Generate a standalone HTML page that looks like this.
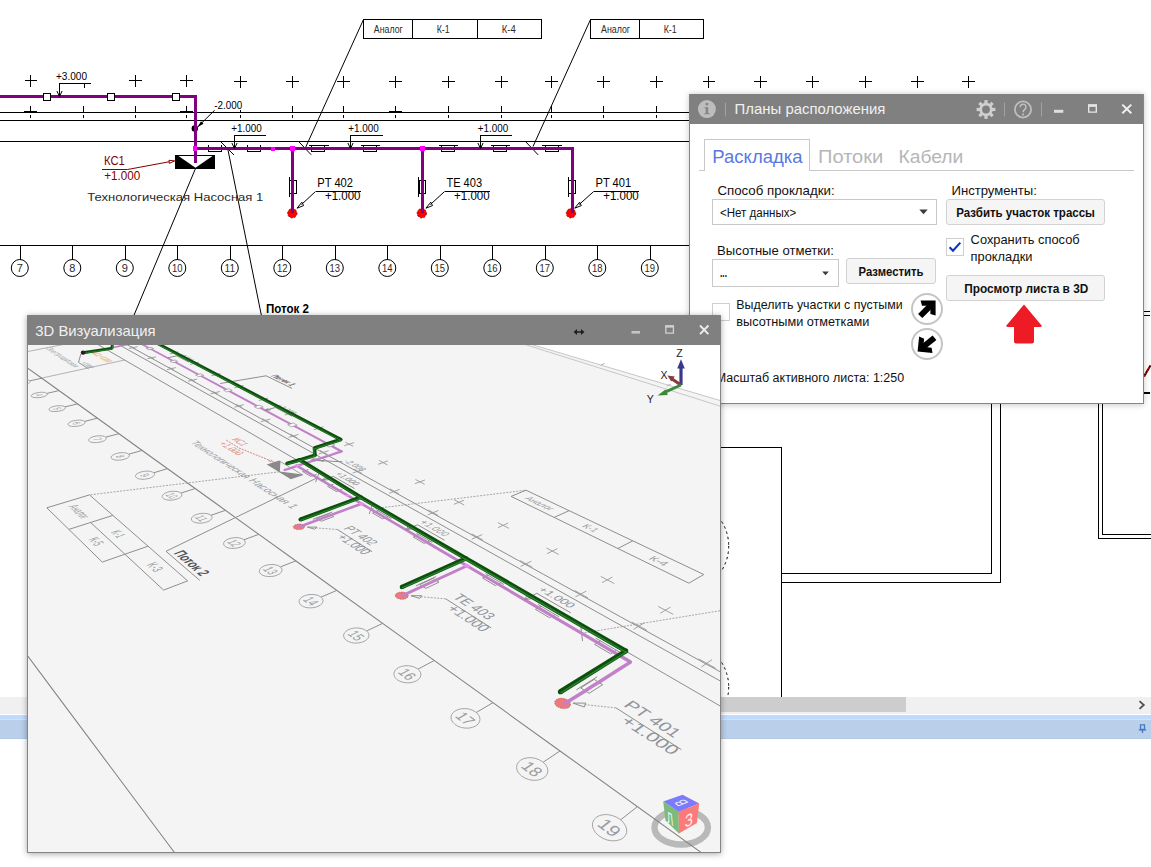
<!DOCTYPE html>
<html lang="ru"><head><meta charset="utf-8"><title>Планы расположения</title>
<style>
html,body{margin:0;padding:0}
body{width:1151px;height:867px;position:relative;overflow:hidden;background:#fff;font-family:"Liberation Sans",sans-serif}
svg text{font-family:"Liberation Sans",sans-serif}
.abs{position:absolute}
#cad{left:0;top:0}
#sb{left:0;top:697px;width:1151px;height:17px;background:#f0f0f0}
#sbthumb{left:60px;top:0;width:846px;height:15px;background:#cdcdcd}
#bar1{left:0;top:715px;width:1151px;height:5px;background:#c0daff;box-shadow:inset 0 -1px 0 #d4e3f3}
#bar2{left:0;top:720px;width:1151px;height:19px;background:#b9cfea;box-shadow:inset 0 -1px 0 #b2c9e5}
/* panel */
#panel{left:690px;top:94px;width:453px;height:309px;background:#fff;box-shadow:-1px 0 0 0 #858585,1px 0 0 0 #858585,0 1px 0 0 #858585,-1px 1px 0 0 #858585,1px 1px 0 0 #858585,0 1px 6px 1px rgba(0,0,0,.22)}
#ptitle{left:0;top:0;width:453px;height:30px;background:#808080}
.t{position:absolute;white-space:nowrap;line-height:1;color:#000}
.btn{position:absolute;background:#f5f5f5;border:1px solid #d2d2d2;border-radius:3px;box-sizing:border-box}
.combo{position:absolute;background:#fff;border:1px solid #c9c9c9;box-sizing:border-box}
.chk{position:absolute;background:#fff;border:1px solid #cfcfcf;box-sizing:border-box;width:18px;height:18px}
/* 3d window */
#win{left:27px;top:315px;width:694px;height:538px;background:#f4f4f4;box-shadow:0 0 0 0 #000,0 1px 6px rgba(0,0,0,.35)}
#wtitle{left:0;top:0;width:694px;height:30px;background:#808080}
#wbody{left:0;top:30px;width:693px;height:507px;border-left:1px solid #858585;border-right:1px solid #858585;border-bottom:1px solid #858585;box-sizing:content-box;width:692px;overflow:hidden}
</style></head><body>
<svg id="cad" class="abs" width="1151" height="867" viewBox="0 0 1151 867">
<path d="M-420 112.5 L1100 112.5" stroke="#000" stroke-width="1" fill="none" shape-rendering="crispEdges"/>
<path d="M-420 120.5 L1100 120.5" stroke="#000" stroke-width="1" fill="none" shape-rendering="crispEdges"/>
<path d="M-420 141.5 L1100 141.5" stroke="#000" stroke-width="1" fill="none" shape-rendering="crispEdges"/>
<path d="M-190 141.5 L-190 245.5" stroke="#000" stroke-width="1" fill="none" shape-rendering="crispEdges"/>
<path d="M-298 141.5 L-298 245.5" stroke="#000" stroke-width="1" fill="none" shape-rendering="crispEdges"/>
<path d="M-443.5 80.5 L-431 80.5" stroke="#000" stroke-width="1" fill="none" shape-rendering="crispEdges"/>
<path d="M-437.5 74.5 L-437.5 86.5" stroke="#000" stroke-width="1" fill="none" shape-rendering="crispEdges"/>
<path d="M-437.5 106 L-437.5 112.5" stroke="#000" stroke-width="1" fill="none" shape-rendering="crispEdges"/>
<path d="M-437.5 115 L-437.5 117.5" stroke="#000" stroke-width="1" fill="none" shape-rendering="crispEdges"/>
<path d="M-391.4 80.5 L-378.9 80.5" stroke="#000" stroke-width="1" fill="none" shape-rendering="crispEdges"/>
<path d="M-385.4 74.5 L-385.4 86.5" stroke="#000" stroke-width="1" fill="none" shape-rendering="crispEdges"/>
<path d="M-385.4 106 L-385.4 112.5" stroke="#000" stroke-width="1" fill="none" shape-rendering="crispEdges"/>
<path d="M-385.4 115 L-385.4 117.5" stroke="#000" stroke-width="1" fill="none" shape-rendering="crispEdges"/>
<path d="M-339.3 80.5 L-326.8 80.5" stroke="#000" stroke-width="1" fill="none" shape-rendering="crispEdges"/>
<path d="M-333.3 74.5 L-333.3 86.5" stroke="#000" stroke-width="1" fill="none" shape-rendering="crispEdges"/>
<path d="M-333.3 106 L-333.3 112.5" stroke="#000" stroke-width="1" fill="none" shape-rendering="crispEdges"/>
<path d="M-333.3 115 L-333.3 117.5" stroke="#000" stroke-width="1" fill="none" shape-rendering="crispEdges"/>
<path d="M-287.2 80.5 L-274.7 80.5" stroke="#000" stroke-width="1" fill="none" shape-rendering="crispEdges"/>
<path d="M-281.2 74.5 L-281.2 86.5" stroke="#000" stroke-width="1" fill="none" shape-rendering="crispEdges"/>
<path d="M-281.2 106 L-281.2 112.5" stroke="#000" stroke-width="1" fill="none" shape-rendering="crispEdges"/>
<path d="M-281.2 115 L-281.2 117.5" stroke="#000" stroke-width="1" fill="none" shape-rendering="crispEdges"/>
<path d="M-235.1 80.5 L-222.6 80.5" stroke="#000" stroke-width="1" fill="none" shape-rendering="crispEdges"/>
<path d="M-229.1 74.5 L-229.1 86.5" stroke="#000" stroke-width="1" fill="none" shape-rendering="crispEdges"/>
<path d="M-229.1 106 L-229.1 112.5" stroke="#000" stroke-width="1" fill="none" shape-rendering="crispEdges"/>
<path d="M-229.1 115 L-229.1 117.5" stroke="#000" stroke-width="1" fill="none" shape-rendering="crispEdges"/>
<path d="M-183 80.5 L-170.5 80.5" stroke="#000" stroke-width="1" fill="none" shape-rendering="crispEdges"/>
<path d="M-177 74.5 L-177 86.5" stroke="#000" stroke-width="1" fill="none" shape-rendering="crispEdges"/>
<path d="M-177 106 L-177 112.5" stroke="#000" stroke-width="1" fill="none" shape-rendering="crispEdges"/>
<path d="M-177 115 L-177 117.5" stroke="#000" stroke-width="1" fill="none" shape-rendering="crispEdges"/>
<path d="M-130.9 80.5 L-118.4 80.5" stroke="#000" stroke-width="1" fill="none" shape-rendering="crispEdges"/>
<path d="M-124.9 74.5 L-124.9 86.5" stroke="#000" stroke-width="1" fill="none" shape-rendering="crispEdges"/>
<path d="M-124.9 106 L-124.9 112.5" stroke="#000" stroke-width="1" fill="none" shape-rendering="crispEdges"/>
<path d="M-124.9 115 L-124.9 117.5" stroke="#000" stroke-width="1" fill="none" shape-rendering="crispEdges"/>
<path d="M-78.8 80.5 L-66.3 80.5" stroke="#000" stroke-width="1" fill="none" shape-rendering="crispEdges"/>
<path d="M-72.8 74.5 L-72.8 86.5" stroke="#000" stroke-width="1" fill="none" shape-rendering="crispEdges"/>
<path d="M-72.8 106 L-72.8 112.5" stroke="#000" stroke-width="1" fill="none" shape-rendering="crispEdges"/>
<path d="M-72.8 115 L-72.8 117.5" stroke="#000" stroke-width="1" fill="none" shape-rendering="crispEdges"/>
<path d="M-26.7 80.5 L-14.2 80.5" stroke="#000" stroke-width="1" fill="none" shape-rendering="crispEdges"/>
<path d="M-20.7 74.5 L-20.7 86.5" stroke="#000" stroke-width="1" fill="none" shape-rendering="crispEdges"/>
<path d="M-20.7 106 L-20.7 112.5" stroke="#000" stroke-width="1" fill="none" shape-rendering="crispEdges"/>
<path d="M-20.7 115 L-20.7 117.5" stroke="#000" stroke-width="1" fill="none" shape-rendering="crispEdges"/>
<path d="M24.9 80.5 L37.4 80.5" stroke="#000" stroke-width="1" fill="none" shape-rendering="crispEdges"/>
<path d="M30.9 74.5 L30.9 86.5" stroke="#000" stroke-width="1" fill="none" shape-rendering="crispEdges"/>
<path d="M30.9 106 L30.9 112.5" stroke="#000" stroke-width="1" fill="none" shape-rendering="crispEdges"/>
<path d="M30.9 115 L30.9 117.5" stroke="#000" stroke-width="1" fill="none" shape-rendering="crispEdges"/>
<rect x="24.4" y="110.5" width="13" height="2" fill="#000" shape-rendering="crispEdges"/>
<path d="M84.5 83.5 L84.5 88" stroke="#000" stroke-width="1" fill="none" shape-rendering="crispEdges"/>
<path d="M83.5 106 L83.5 112.5" stroke="#000" stroke-width="1" fill="none" shape-rendering="crispEdges"/>
<path d="M83.5 115 L83.5 117.5" stroke="#000" stroke-width="1" fill="none" shape-rendering="crispEdges"/>
<path d="M129.2 80.5 L141.7 80.5" stroke="#000" stroke-width="1" fill="none" shape-rendering="crispEdges"/>
<path d="M135.2 74.5 L135.2 86.5" stroke="#000" stroke-width="1" fill="none" shape-rendering="crispEdges"/>
<path d="M135.2 106 L135.2 112.5" stroke="#000" stroke-width="1" fill="none" shape-rendering="crispEdges"/>
<path d="M135.2 115 L135.2 117.5" stroke="#000" stroke-width="1" fill="none" shape-rendering="crispEdges"/>
<path d="M180.3 80.5 L192.8 80.5" stroke="#000" stroke-width="1" fill="none" shape-rendering="crispEdges"/>
<path d="M186.3 74.5 L186.3 86.5" stroke="#000" stroke-width="1" fill="none" shape-rendering="crispEdges"/>
<path d="M186.3 106 L186.3 112.5" stroke="#000" stroke-width="1" fill="none" shape-rendering="crispEdges"/>
<path d="M186.3 115 L186.3 117.5" stroke="#000" stroke-width="1" fill="none" shape-rendering="crispEdges"/>
<rect x="179.8" y="110.5" width="13" height="2" fill="#000" shape-rendering="crispEdges"/>
<path d="M234 81.5 L246.5 81.5" stroke="#000" stroke-width="1" fill="none" shape-rendering="crispEdges"/>
<path d="M240 75.5 L240 87.5" stroke="#000" stroke-width="1" fill="none" shape-rendering="crispEdges"/>
<path d="M240 109.5 L240 112.5" stroke="#000" stroke-width="1" fill="none" shape-rendering="crispEdges"/>
<path d="M240 115 L240 117.5" stroke="#000" stroke-width="1" fill="none" shape-rendering="crispEdges"/>
<path d="M286.3 81.5 L298.8 81.5" stroke="#000" stroke-width="1" fill="none" shape-rendering="crispEdges"/>
<path d="M292.3 75.5 L292.3 87.5" stroke="#000" stroke-width="1" fill="none" shape-rendering="crispEdges"/>
<path d="M292.3 106 L292.3 112.5" stroke="#000" stroke-width="1" fill="none" shape-rendering="crispEdges"/>
<path d="M292.3 115 L292.3 117.5" stroke="#000" stroke-width="1" fill="none" shape-rendering="crispEdges"/>
<path d="M337 81.5 L349.5 81.5" stroke="#000" stroke-width="1" fill="none" shape-rendering="crispEdges"/>
<path d="M343 75.5 L343 87.5" stroke="#000" stroke-width="1" fill="none" shape-rendering="crispEdges"/>
<path d="M343 106 L343 112.5" stroke="#000" stroke-width="1" fill="none" shape-rendering="crispEdges"/>
<path d="M343 115 L343 117.5" stroke="#000" stroke-width="1" fill="none" shape-rendering="crispEdges"/>
<path d="M389.3 81.5 L401.8 81.5" stroke="#000" stroke-width="1" fill="none" shape-rendering="crispEdges"/>
<path d="M395.3 75.5 L395.3 87.5" stroke="#000" stroke-width="1" fill="none" shape-rendering="crispEdges"/>
<path d="M395.3 106 L395.3 112.5" stroke="#000" stroke-width="1" fill="none" shape-rendering="crispEdges"/>
<path d="M395.3 115 L395.3 117.5" stroke="#000" stroke-width="1" fill="none" shape-rendering="crispEdges"/>
<rect x="388.8" y="110.5" width="13" height="2" fill="#000" shape-rendering="crispEdges"/>
<path d="M442 81.5 L454.5 81.5" stroke="#000" stroke-width="1" fill="none" shape-rendering="crispEdges"/>
<path d="M448 75.5 L448 87.5" stroke="#000" stroke-width="1" fill="none" shape-rendering="crispEdges"/>
<path d="M448 106 L448 112.5" stroke="#000" stroke-width="1" fill="none" shape-rendering="crispEdges"/>
<path d="M448 115 L448 117.5" stroke="#000" stroke-width="1" fill="none" shape-rendering="crispEdges"/>
<path d="M495 81.5 L507.5 81.5" stroke="#000" stroke-width="1" fill="none" shape-rendering="crispEdges"/>
<path d="M501 75.5 L501 87.5" stroke="#000" stroke-width="1" fill="none" shape-rendering="crispEdges"/>
<path d="M501 106 L501 112.5" stroke="#000" stroke-width="1" fill="none" shape-rendering="crispEdges"/>
<path d="M501 115 L501 117.5" stroke="#000" stroke-width="1" fill="none" shape-rendering="crispEdges"/>
<path d="M545.3 81.5 L557.8 81.5" stroke="#000" stroke-width="1" fill="none" shape-rendering="crispEdges"/>
<path d="M551.3 75.5 L551.3 87.5" stroke="#000" stroke-width="1" fill="none" shape-rendering="crispEdges"/>
<path d="M551.3 106 L551.3 112.5" stroke="#000" stroke-width="1" fill="none" shape-rendering="crispEdges"/>
<path d="M551.3 115 L551.3 117.5" stroke="#000" stroke-width="1" fill="none" shape-rendering="crispEdges"/>
<path d="M597.4 81.5 L609.9 81.5" stroke="#000" stroke-width="1" fill="none" shape-rendering="crispEdges"/>
<path d="M603.4 75.5 L603.4 87.5" stroke="#000" stroke-width="1" fill="none" shape-rendering="crispEdges"/>
<path d="M603.4 106 L603.4 112.5" stroke="#000" stroke-width="1" fill="none" shape-rendering="crispEdges"/>
<path d="M603.4 115 L603.4 117.5" stroke="#000" stroke-width="1" fill="none" shape-rendering="crispEdges"/>
<path d="M650.1 81.5 L662.6 81.5" stroke="#000" stroke-width="1" fill="none" shape-rendering="crispEdges"/>
<path d="M656.1 75.5 L656.1 87.5" stroke="#000" stroke-width="1" fill="none" shape-rendering="crispEdges"/>
<path d="M656.1 106 L656.1 112.5" stroke="#000" stroke-width="1" fill="none" shape-rendering="crispEdges"/>
<path d="M656.1 115 L656.1 117.5" stroke="#000" stroke-width="1" fill="none" shape-rendering="crispEdges"/>
<path d="M702.7 81.5 L715.2 81.5" stroke="#000" stroke-width="1" fill="none" shape-rendering="crispEdges"/>
<path d="M708.7 75.5 L708.7 87.5" stroke="#000" stroke-width="1" fill="none" shape-rendering="crispEdges"/>
<path d="M754 81.5 L766.5 81.5" stroke="#000" stroke-width="1" fill="none" shape-rendering="crispEdges"/>
<path d="M760 75.5 L760 87.5" stroke="#000" stroke-width="1" fill="none" shape-rendering="crispEdges"/>
<path d="M806 81.5 L818.5 81.5" stroke="#000" stroke-width="1" fill="none" shape-rendering="crispEdges"/>
<path d="M812 75.5 L812 87.5" stroke="#000" stroke-width="1" fill="none" shape-rendering="crispEdges"/>
<path d="M859 81.5 L871.5 81.5" stroke="#000" stroke-width="1" fill="none" shape-rendering="crispEdges"/>
<path d="M865 75.5 L865 87.5" stroke="#000" stroke-width="1" fill="none" shape-rendering="crispEdges"/>
<path d="M911 81.5 L923.5 81.5" stroke="#000" stroke-width="1" fill="none" shape-rendering="crispEdges"/>
<path d="M917 75.5 L917 87.5" stroke="#000" stroke-width="1" fill="none" shape-rendering="crispEdges"/>
<path d="M962 81.5 L974.5 81.5" stroke="#000" stroke-width="1" fill="none" shape-rendering="crispEdges"/>
<path d="M968 75.5 L968 87.5" stroke="#000" stroke-width="1" fill="none" shape-rendering="crispEdges"/>
<path d="M-420 245.5 L1100 245.5" stroke="#000" stroke-width="1" fill="none" shape-rendering="crispEdges"/>
<path d="M-294.8 245.5 L-294.8 259.5" stroke="#000" stroke-width="1" fill="none" shape-rendering="crispEdges"/>
<circle cx="-295.2" cy="268" r="8.5" stroke="#000" stroke-width="1" fill="none"/>
<text x="-295.2" y="272" font-size="11" fill="#2a2a2a" text-anchor="middle">1</text>
<path d="M-242.3 245.5 L-242.3 259.5" stroke="#000" stroke-width="1" fill="none" shape-rendering="crispEdges"/>
<circle cx="-242.7" cy="268" r="8.5" stroke="#000" stroke-width="1" fill="none"/>
<text x="-242.7" y="272" font-size="11" fill="#2a2a2a" text-anchor="middle">2</text>
<path d="M-189.8 245.5 L-189.8 259.5" stroke="#000" stroke-width="1" fill="none" shape-rendering="crispEdges"/>
<circle cx="-190.2" cy="268" r="8.5" stroke="#000" stroke-width="1" fill="none"/>
<text x="-190.2" y="272" font-size="11" fill="#2a2a2a" text-anchor="middle">3</text>
<path d="M-137.3 245.5 L-137.3 259.5" stroke="#000" stroke-width="1" fill="none" shape-rendering="crispEdges"/>
<circle cx="-137.7" cy="268" r="8.5" stroke="#000" stroke-width="1" fill="none"/>
<text x="-137.7" y="272" font-size="11" fill="#2a2a2a" text-anchor="middle">4</text>
<path d="M-84.8 245.5 L-84.8 259.5" stroke="#000" stroke-width="1" fill="none" shape-rendering="crispEdges"/>
<circle cx="-85.2" cy="268" r="8.5" stroke="#000" stroke-width="1" fill="none"/>
<text x="-85.2" y="272" font-size="11" fill="#2a2a2a" text-anchor="middle">5</text>
<path d="M-32.3 245.5 L-32.3 259.5" stroke="#000" stroke-width="1" fill="none" shape-rendering="crispEdges"/>
<circle cx="-32.7" cy="268" r="8.5" stroke="#000" stroke-width="1" fill="none"/>
<text x="-32.7" y="272" font-size="11" fill="#2a2a2a" text-anchor="middle">6</text>
<path d="M20.2 245.5 L20.2 259.5" stroke="#000" stroke-width="1" fill="none" shape-rendering="crispEdges"/>
<circle cx="19.8" cy="268" r="8.5" stroke="#000" stroke-width="1" fill="none"/>
<text x="19.8" y="272" font-size="11" fill="#2a2a2a" text-anchor="middle">7</text>
<path d="M72.7 245.5 L72.7 259.5" stroke="#000" stroke-width="1" fill="none" shape-rendering="crispEdges"/>
<circle cx="72.3" cy="268" r="8.5" stroke="#000" stroke-width="1" fill="none"/>
<text x="72.3" y="272" font-size="11" fill="#2a2a2a" text-anchor="middle">8</text>
<path d="M125.2 245.5 L125.2 259.5" stroke="#000" stroke-width="1" fill="none" shape-rendering="crispEdges"/>
<circle cx="124.8" cy="268" r="8.5" stroke="#000" stroke-width="1" fill="none"/>
<text x="124.8" y="272" font-size="11" fill="#2a2a2a" text-anchor="middle">9</text>
<path d="M177.7 245.5 L177.7 259.5" stroke="#000" stroke-width="1" fill="none" shape-rendering="crispEdges"/>
<circle cx="177.3" cy="268" r="8.5" stroke="#000" stroke-width="1" fill="none"/>
<text x="177.3" y="272" font-size="11" fill="#2a2a2a" textLength="10.5" lengthAdjust="spacingAndGlyphs" text-anchor="middle">10</text>
<path d="M230.2 245.5 L230.2 259.5" stroke="#000" stroke-width="1" fill="none" shape-rendering="crispEdges"/>
<circle cx="229.8" cy="268" r="8.5" stroke="#000" stroke-width="1" fill="none"/>
<text x="229.8" y="272" font-size="11" fill="#2a2a2a" textLength="10.5" lengthAdjust="spacingAndGlyphs" text-anchor="middle">11</text>
<path d="M282.7 245.5 L282.7 259.5" stroke="#000" stroke-width="1" fill="none" shape-rendering="crispEdges"/>
<circle cx="282.3" cy="268" r="8.5" stroke="#000" stroke-width="1" fill="none"/>
<text x="282.3" y="272" font-size="11" fill="#2a2a2a" textLength="10.5" lengthAdjust="spacingAndGlyphs" text-anchor="middle">12</text>
<path d="M335.2 245.5 L335.2 259.5" stroke="#000" stroke-width="1" fill="none" shape-rendering="crispEdges"/>
<circle cx="334.8" cy="268" r="8.5" stroke="#000" stroke-width="1" fill="none"/>
<text x="334.8" y="272" font-size="11" fill="#2a2a2a" textLength="10.5" lengthAdjust="spacingAndGlyphs" text-anchor="middle">13</text>
<path d="M387.7 245.5 L387.7 259.5" stroke="#000" stroke-width="1" fill="none" shape-rendering="crispEdges"/>
<circle cx="387.3" cy="268" r="8.5" stroke="#000" stroke-width="1" fill="none"/>
<text x="387.3" y="272" font-size="11" fill="#2a2a2a" textLength="10.5" lengthAdjust="spacingAndGlyphs" text-anchor="middle">14</text>
<path d="M440.2 245.5 L440.2 259.5" stroke="#000" stroke-width="1" fill="none" shape-rendering="crispEdges"/>
<circle cx="439.8" cy="268" r="8.5" stroke="#000" stroke-width="1" fill="none"/>
<text x="439.8" y="272" font-size="11" fill="#2a2a2a" textLength="10.5" lengthAdjust="spacingAndGlyphs" text-anchor="middle">15</text>
<path d="M492.7 245.5 L492.7 259.5" stroke="#000" stroke-width="1" fill="none" shape-rendering="crispEdges"/>
<circle cx="492.3" cy="268" r="8.5" stroke="#000" stroke-width="1" fill="none"/>
<text x="492.3" y="272" font-size="11" fill="#2a2a2a" textLength="10.5" lengthAdjust="spacingAndGlyphs" text-anchor="middle">16</text>
<path d="M545.2 245.5 L545.2 259.5" stroke="#000" stroke-width="1" fill="none" shape-rendering="crispEdges"/>
<circle cx="544.8" cy="268" r="8.5" stroke="#000" stroke-width="1" fill="none"/>
<text x="544.8" y="272" font-size="11" fill="#2a2a2a" textLength="10.5" lengthAdjust="spacingAndGlyphs" text-anchor="middle">17</text>
<path d="M597.7 245.5 L597.7 259.5" stroke="#000" stroke-width="1" fill="none" shape-rendering="crispEdges"/>
<circle cx="597.3" cy="268" r="8.5" stroke="#000" stroke-width="1" fill="none"/>
<text x="597.3" y="272" font-size="11" fill="#2a2a2a" textLength="10.5" lengthAdjust="spacingAndGlyphs" text-anchor="middle">18</text>
<path d="M650.2 245.5 L650.2 259.5" stroke="#000" stroke-width="1" fill="none" shape-rendering="crispEdges"/>
<circle cx="649.8" cy="268" r="8.5" stroke="#000" stroke-width="1" fill="none"/>
<text x="649.8" y="272" font-size="11" fill="#2a2a2a" textLength="10.5" lengthAdjust="spacingAndGlyphs" text-anchor="middle">19</text>
<path d="M702.7 245.5 L702.7 259.5" stroke="#000" stroke-width="1" fill="none" shape-rendering="crispEdges"/>
<circle cx="702.3" cy="268" r="8.5" stroke="#000" stroke-width="1" fill="none"/>
<text x="702.3" y="272" font-size="11" fill="#2a2a2a" textLength="10.5" lengthAdjust="spacingAndGlyphs" text-anchor="middle">20</text>
<path d="M250 447.5 L781.5 447.5 L781.5 700" stroke="#000" stroke-width="1" fill="none" shape-rendering="crispEdges"/>
<path d="M363.5 19.5 L541.5 19.5 L541.5 38.5 L363.5 38.5 Z" stroke="#000" stroke-width="1" fill="none" shape-rendering="crispEdges"/>
<path d="M412.5 19.5 L412.5 38.5" stroke="#000" stroke-width="1" fill="none" shape-rendering="crispEdges"/>
<path d="M477.5 19.5 L477.5 38.5" stroke="#000" stroke-width="1" fill="none" shape-rendering="crispEdges"/>
<path d="M590.5 19.5 L703.5 19.5 L703.5 38.5 L590.5 38.5 Z" stroke="#000" stroke-width="1" fill="none" shape-rendering="crispEdges"/>
<path d="M639.5 19.5 L639.5 38.5" stroke="#000" stroke-width="1" fill="none" shape-rendering="crispEdges"/>
<text x="373.8" y="32.9" font-size="11" fill="#2a2a2a" textLength="29" lengthAdjust="spacingAndGlyphs">Аналог</text>
<text x="436.7" y="32.9" font-size="11" fill="#2a2a2a" textLength="13" lengthAdjust="spacingAndGlyphs">К-1</text>
<text x="501.8" y="32.9" font-size="11" fill="#2a2a2a" textLength="14" lengthAdjust="spacingAndGlyphs">К-4</text>
<text x="601" y="32.9" font-size="11" fill="#2a2a2a" textLength="29" lengthAdjust="spacingAndGlyphs">Аналог</text>
<text x="663.7" y="32.9" font-size="11" fill="#2a2a2a" textLength="13" lengthAdjust="spacingAndGlyphs">К-1</text>
<path d="M228 150 L261.5 316" stroke="#000" stroke-width="1" fill="none"/>
<path d="M305.6 147.4 L363.5 19.5" stroke="#000" stroke-width="1" fill="none"/>
<path d="M533 146.5 L590.5 19.5" stroke="#000" stroke-width="1" fill="none"/>
<path d="M195.5 168.5 L130.5 323.5" stroke="#000" stroke-width="1" fill="none"/>
<path d="M221 142 L234 155" stroke="#000" stroke-width="1" fill="none"/>
<path d="M298.7 141.6 L311.2 154.8" stroke="#000" stroke-width="1" fill="none"/>
<path d="M525.3 141.3 L538.2 154.9" stroke="#000" stroke-width="1" fill="none"/>
<text x="266" y="313.1" font-size="12" fill="#000" textLength="43" lengthAdjust="spacingAndGlyphs" font-weight="bold">Поток 2</text>
<path d="M208.5 145 L208.5 151.5 L221.5 151.5 L221.5 145" stroke="#000" stroke-width="1" fill="none" shape-rendering="crispEdges"/>
<path d="M247.5 145 L247.5 151.5 L260.5 151.5 L260.5 145" stroke="#000" stroke-width="1" fill="none" shape-rendering="crispEdges"/>
<path d="M309 145.5 L329 145.5" stroke="#000" stroke-width="1" fill="none" shape-rendering="crispEdges"/>
<path d="M311.5 145.5 L311.5 151.5 L324.5 151.5 L324.5 145.5" stroke="#000" stroke-width="1" fill="none" shape-rendering="crispEdges"/>
<path d="M360.5 145.5 L379.5 145.5" stroke="#000" stroke-width="1" fill="none" shape-rendering="crispEdges"/>
<path d="M363.5 145.5 L363.5 151.5 L376.5 151.5 L376.5 145.5" stroke="#000" stroke-width="1" fill="none" shape-rendering="crispEdges"/>
<path d="M438.5 145.5 L457.5 145.5" stroke="#000" stroke-width="1" fill="none" shape-rendering="crispEdges"/>
<path d="M441.5 145.5 L441.5 151.5 L454.5 151.5 L454.5 145.5" stroke="#000" stroke-width="1" fill="none" shape-rendering="crispEdges"/>
<path d="M490.5 145.5 L510 145.5" stroke="#000" stroke-width="1" fill="none" shape-rendering="crispEdges"/>
<path d="M493.5 145.5 L493.5 151.5 L506.5 151.5 L506.5 145.5" stroke="#000" stroke-width="1" fill="none" shape-rendering="crispEdges"/>
<path d="M541.5 145.5 L561.5 145.5" stroke="#000" stroke-width="1" fill="none" shape-rendering="crispEdges"/>
<path d="M545.5 145.5 L545.5 151.5 L558.5 151.5 L558.5 145.5" stroke="#000" stroke-width="1" fill="none" shape-rendering="crispEdges"/>
<path d="M289.5 180.5 L296 180.5 L296 193.5 L289.5 193.5 Z" stroke="#000" stroke-width="1" fill="none" shape-rendering="crispEdges"/>
<path d="M289 177 L289 197" stroke="#000" stroke-width="1" fill="none" shape-rendering="crispEdges"/>
<path d="M419 180.5 L425.5 180.5 L425.5 193.5 L419 193.5 Z" stroke="#000" stroke-width="1" fill="none" shape-rendering="crispEdges"/>
<path d="M418.5 177 L418.5 197" stroke="#000" stroke-width="1" fill="none" shape-rendering="crispEdges"/>
<path d="M568.5 180.5 L575 180.5 L575 193.5 L568.5 193.5 Z" stroke="#000" stroke-width="1" fill="none" shape-rendering="crispEdges"/>
<path d="M568 177 L568 197" stroke="#000" stroke-width="1" fill="none" shape-rendering="crispEdges"/>
<path d="M175 155 L215 155 L215 169 L175 169 Z" stroke="none" fill="#000" shape-rendering="crispEdges"/>
<path d="M178.5 156 L212.5 156 L195.5 167.8 Z" stroke="none" fill="#fff"/>
<circle cx="194.8" cy="128.4" r="3.2" stroke="none" fill="#000"/>
<circle cx="292.3" cy="213.3" r="4.7" stroke="#700" stroke-width="0.8" stroke-dasharray="2 1.5" fill="#ff0000"/>
<circle cx="421.8" cy="213.3" r="4.7" stroke="#700" stroke-width="0.8" stroke-dasharray="2 1.5" fill="#ff0000"/>
<circle cx="571" cy="213.3" r="4.7" stroke="#700" stroke-width="0.8" stroke-dasharray="2 1.5" fill="#ff0000"/>
<path d="M-246 170 L-246 96.5 L195.5 96.5 L195.5 162.5" stroke="#800080" stroke-width="3" fill="none" shape-rendering="crispEdges"/>
<path d="M194 148.5 L572 148.5 L572 213" stroke="#800080" stroke-width="3" fill="none" shape-rendering="crispEdges"/>
<path d="M292.5 148.5 L292.5 213" stroke="#800080" stroke-width="3" fill="none" shape-rendering="crispEdges"/>
<path d="M422 148.5 L422 213" stroke="#800080" stroke-width="3" fill="none" shape-rendering="crispEdges"/>
<path d="M-215.8 93 L-208.8 93 L-208.8 100 L-215.8 100 Z" stroke="#000" stroke-width="1" fill="#fff" shape-rendering="crispEdges"/>
<path d="M-151.1 93 L-144.1 93 L-144.1 100 L-151.1 100 Z" stroke="#000" stroke-width="1" fill="#fff" shape-rendering="crispEdges"/>
<path d="M-86.4 93 L-79.4 93 L-79.4 100 L-86.4 100 Z" stroke="#000" stroke-width="1" fill="#fff" shape-rendering="crispEdges"/>
<path d="M-21.7 93 L-14.7 93 L-14.7 100 L-21.7 100 Z" stroke="#000" stroke-width="1" fill="#fff" shape-rendering="crispEdges"/>
<path d="M43 93 L50 93 L50 100 L43 100 Z" stroke="#000" stroke-width="1" fill="#fff" shape-rendering="crispEdges"/>
<path d="M107.7 93 L114.7 93 L114.7 100 L107.7 100 Z" stroke="#000" stroke-width="1" fill="#fff" shape-rendering="crispEdges"/>
<path d="M172.4 93 L179.4 93 L179.4 100 L172.4 100 Z" stroke="#000" stroke-width="1" fill="#fff" shape-rendering="crispEdges"/>
<path d="M193 146 L197.3 146 L197.3 150.7 L193 150.7 Z" stroke="none" fill="#ff00ff" shape-rendering="crispEdges"/>
<path d="M271.3 146.7 L275 146.7 L275 150.5 L271.3 150.5 Z" stroke="none" fill="#ff00ff" shape-rendering="crispEdges"/>
<path d="M290 146.3 L295 146.3 L295 150.8 L290 150.8 Z" stroke="none" fill="#ff00ff" shape-rendering="crispEdges"/>
<path d="M419.7 146.3 L424.5 146.3 L424.5 150.8 L419.7 150.8 Z" stroke="none" fill="#ff00ff" shape-rendering="crispEdges"/>
<text x="56" y="80.3" font-size="10" fill="#000" textLength="31" lengthAdjust="spacingAndGlyphs">+3.000</text>
<path d="M91 83.5 L59.5 83.5 L59.5 96" stroke="#000" stroke-width="1" fill="none" shape-rendering="crispEdges"/>
<path d="M56.9 91 L59.5 96.5 L62.1 91" stroke="#000" stroke-width="1" fill="none"/>
<text x="214.3" y="109" font-size="10" fill="#000" textLength="28" lengthAdjust="spacingAndGlyphs">-2.000</text>
<path d="M214.7 110.2 L197.6 127" stroke="#000" stroke-width="1" fill="none"/>
<path d="M203.5 123.8 L197.4 127.2 L201 121.2 Z" stroke="none" fill="#000"/>
<text x="231.3" y="131.7" font-size="10" fill="#000" textLength="30.5" lengthAdjust="spacingAndGlyphs">+1.000</text>
<path d="M266 135.5 L234.5 135.5 L234.5 148" stroke="#000" stroke-width="1" fill="none" shape-rendering="crispEdges"/>
<path d="M231.9 143 L234.5 148.5 L237.1 143" stroke="#000" stroke-width="1" fill="none"/>
<text x="348.2" y="131.7" font-size="10" fill="#000" textLength="30.5" lengthAdjust="spacingAndGlyphs">+1.000</text>
<path d="M383 135.5 L350.5 135.5 L350.5 148" stroke="#000" stroke-width="1" fill="none" shape-rendering="crispEdges"/>
<path d="M347.9 143 L350.5 148.5 L353.1 143" stroke="#000" stroke-width="1" fill="none"/>
<text x="477.7" y="131.7" font-size="10" fill="#000" textLength="30.5" lengthAdjust="spacingAndGlyphs">+1.000</text>
<path d="M512 135.5 L480.5 135.5 L480.5 148" stroke="#000" stroke-width="1" fill="none" shape-rendering="crispEdges"/>
<path d="M477.9 143 L480.5 148.5 L483.1 143" stroke="#000" stroke-width="1" fill="none"/>
<text x="104" y="165" font-size="12" fill="#800000" textLength="20.8" lengthAdjust="spacingAndGlyphs">КС1</text>
<text x="104.3" y="179.9" font-size="12" fill="#800000" textLength="36" lengthAdjust="spacingAndGlyphs">+1.000</text>
<path d="M102 169.5 L127.5 169.5 L169 161.8" stroke="#800000" stroke-width="1" fill="none"/>
<path d="M169 160.3 L174.7 160.9 L169.3 163.4 Z" stroke="#800000" stroke-width="1" fill="none"/>
<text x="87.3" y="200.8" font-size="11.5" fill="#2a2a2a" textLength="176" lengthAdjust="spacingAndGlyphs">Технологическая Насосная 1</text>
<text x="317.3" y="186.8" font-size="12.2" fill="#000" textLength="35.7" lengthAdjust="spacingAndGlyphs">PT 402</text>
<text x="325" y="199.7" font-size="12.2" fill="#000" textLength="35.5" lengthAdjust="spacingAndGlyphs">+1.000</text>
<path d="M360.6 191.5 L315.5 191.5" stroke="#000" stroke-width="1" fill="none" shape-rendering="crispEdges"/>
<path d="M315.5 191.5 L301.5 204.5" stroke="#000" stroke-width="1" fill="none"/>
<path d="M301.9 202.2 L297 208.2 L303.6 205.6 Z" stroke="#000" stroke-width="1" fill="none"/>
<text x="446.4" y="186.8" font-size="12.2" fill="#000" textLength="35.7" lengthAdjust="spacingAndGlyphs">TE 403</text>
<text x="454.1" y="199.7" font-size="12.2" fill="#000" textLength="35.5" lengthAdjust="spacingAndGlyphs">+1.000</text>
<path d="M489.7 191.5 L444.6 191.5" stroke="#000" stroke-width="1" fill="none" shape-rendering="crispEdges"/>
<path d="M444.6 191.5 L430.4 204.5" stroke="#000" stroke-width="1" fill="none"/>
<path d="M430.8 202.2 L425.9 208.2 L432.5 205.6 Z" stroke="#000" stroke-width="1" fill="none"/>
<text x="595.5" y="186.8" font-size="12.2" fill="#000" textLength="35.7" lengthAdjust="spacingAndGlyphs">PT 401</text>
<text x="603.2" y="199.7" font-size="12.2" fill="#000" textLength="35.5" lengthAdjust="spacingAndGlyphs">+1.000</text>
<path d="M638.8 191.5 L593.7 191.5" stroke="#000" stroke-width="1" fill="none" shape-rendering="crispEdges"/>
<path d="M593.7 191.5 L579.2 204.5" stroke="#000" stroke-width="1" fill="none"/>
<path d="M579.6 202.2 L574.7 208.2 L581.3 205.6 Z" stroke="#000" stroke-width="1" fill="none"/>
<path d="M991.5 400 L991.5 573.5 L781.5 573.5" stroke="#000" stroke-width="1" fill="none" shape-rendering="crispEdges"/>
<path d="M1000.5 400 L1000.5 582.5 L781.5 582.5" stroke="#000" stroke-width="1" fill="none" shape-rendering="crispEdges"/>
<path d="M1102.5 400 L1102.5 534.5 L1152 534.5" stroke="#000" stroke-width="1" fill="none" shape-rendering="crispEdges"/>
<path d="M1098.5 400 L1098.5 538.5 L1152 538.5" stroke="#000" stroke-width="1" fill="none" shape-rendering="crispEdges"/>
<!-- dashed arcs right of 3D window -->
<circle cx="682.5" cy="546" r="46.2" fill="none" stroke="#000" stroke-width="1" stroke-dasharray="2.5 3"/>
<circle cx="682.5" cy="687" r="46.2" fill="none" stroke="#000" stroke-width="1" stroke-dasharray="2.5 3"/>
<!-- bits right of panel -->
<path d="M1144 311.5H1150M1144 315.5H1150" stroke="#000" stroke-width="1" shape-rendering="crispEdges"/>
<path d="M1144 376.5L1150.5 365.5" stroke="#200" stroke-width="2"/><path d="M1144 376.5L1150.5 365.5" stroke="#e01010" stroke-width="2" stroke-dasharray="1.5 1.5"/>
<path d="M1144 393H1150" stroke="#000" stroke-width="2" shape-rendering="crispEdges"/>
</svg>
<div id="sb" class="abs"><div id="sbthumb" class="abs"></div>
<svg class="abs" style="left:1138px;top:3px" width="9" height="10" viewBox="0 0 9 10"><path d="M1.5 1.2L5.8 5L1.5 8.8" fill="none" stroke="#505050" stroke-width="1.8"/></svg></div>
<div id="bar1" class="abs"></div><div id="bar2" class="abs">
<svg class="abs" style="left:1138px;top:4px" width="9" height="10" viewBox="0 0 9 10"><path d="M2.5 0.8H6.5V5.5H2.5Z" fill="none" stroke="#4a78c0" stroke-width="1.3"/><path d="M0.8 5.8H8.2M4.5 5.8V9" stroke="#4a78c0" stroke-width="1.3" fill="none"/></svg></div>

<div id="panel" class="abs">
<div id="ptitle" class="abs">
<svg class="abs" style="left:0;top:0" width="453" height="30" viewBox="0 0 453 30"><circle cx="16.9" cy="15.1" r="9" fill="#bdbdbd"/><rect x="15.7" y="13.2" width="2.5" height="6.8" fill="#868686"/><rect x="14.7" y="13.2" width="2" height="1.2" fill="#868686"/><rect x="14.5" y="19" width="5" height="1.2" fill="#868686"/><rect x="15.6" y="8.9" width="2.6" height="2.4" fill="#868686"/><path d="M35.5 8.5V22.5M314.5 8.5V22.5M351.5 8.5V22.5" stroke="#a2a2a2" stroke-width="1"/><g transform="translate(296 15.5)" fill="#cfcfcf"><rect x="-1.6" y="-9.4" width="3.2" height="4" transform="rotate(0)"/><rect x="-1.6" y="-9.4" width="3.2" height="4" transform="rotate(45)"/><rect x="-1.6" y="-9.4" width="3.2" height="4" transform="rotate(90)"/><rect x="-1.6" y="-9.4" width="3.2" height="4" transform="rotate(135)"/><rect x="-1.6" y="-9.4" width="3.2" height="4" transform="rotate(180)"/><rect x="-1.6" y="-9.4" width="3.2" height="4" transform="rotate(225)"/><rect x="-1.6" y="-9.4" width="3.2" height="4" transform="rotate(270)"/><rect x="-1.6" y="-9.4" width="3.2" height="4" transform="rotate(315)"/><path fill-rule="evenodd" d="M0 -6.7A6.7 6.7 0 1 1 0 6.7A6.7 6.7 0 1 1 0 -6.7ZM0 -3.9A3.9 3.9 0 1 0 0 3.9A3.9 3.9 0 1 0 0 -3.9Z"/></g><circle cx="333" cy="15.5" r="8.1" fill="none" stroke="#bebebe" stroke-width="1.8"/><path d="M330.2 13.2a2.9 2.9 0 1 1 4.6 2.2c-1.2 .9-1.7 1.3-1.7 2.8" fill="none" stroke="#c4c4c4" stroke-width="1.4"/><circle cx="333.1" cy="20.6" r="1" fill="#c4c4c4"/><rect x="364" y="15.8" width="9.3" height="3" fill="#dedede"/><path d="M398.7 11.5h7.6v6.6h-7.6z" fill="none" stroke="#e6e6e6" stroke-width="1.4"/><rect x="398" y="10.2" width="9" height="2.6" fill="#e6e6e6"/><path d="M432.3 10.6l9 8.6M441.3 10.6l-9 8.6" stroke="#f0f0f0" stroke-width="2"/></svg>

</div>
<div class="abs" style="left:9px;top:76px;width:435px;height:1px;background:#c9c9c9"></div>
<div class="abs" style="left:14px;top:45px;width:106px;height:32px;background:#fff;border:1px solid #c9c9c9;border-bottom:none;box-sizing:border-box"></div>




<div class="combo" style="left:22px;top:105px;width:225px;height:26px"></div>

<svg class="abs" style="left:229px;top:115px" width="10" height="6"><path d="M0.3 0.6H8.7L4.5 5.2Z" fill="#3c3c3c"/></svg>

<div class="combo" style="left:22px;top:165px;width:127px;height:28px"></div>

<svg class="abs" style="left:132px;top:177px" width="8" height="5"><path d="M0.2 0.4H6.8L3.5 4.2Z" fill="#3c3c3c"/></svg>
<div class="btn" style="left:156px;top:164px;width:90px;height:26px"></div>

<div class="chk" style="left:22px;top:209px"></div>



<svg class="abs" style="left:219.6px;top:197.8px" width="34" height="34" viewBox="-17 -17 34 34"><circle r="15" fill="#fff" stroke="#c4c4c4" stroke-width="2"/><g transform="rotate(0)"><path d="M-6.8 7L3.6 -3.4" stroke="#000" stroke-width="6" fill="none"/><path d="M-6.4 -8.4H8.6V6.6L3.4 5V-3.2H-5Z" fill="#000"/></g></svg>
<svg class="abs" style="left:219.6px;top:233.3px" width="34" height="34" viewBox="-17 -17 34 34"><circle r="15" fill="#fff" stroke="#c4c4c4" stroke-width="2"/><g transform="rotate(186)"><path d="M-6.8 7L3.6 -3.4" stroke="#000" stroke-width="6" fill="none"/><path d="M-6.4 -8.4H8.6V6.6L3.4 5V-3.2H-5Z" fill="#000"/></g></svg>

<div class="btn" style="left:256px;top:105px;width:159px;height:26px"></div>

<div class="chk" style="left:256px;top:144px"></div>
<svg class="abs" style="left:258px;top:147px" width="14" height="12" viewBox="0 0 14 12"><path d="M1.6 6.2L5 9.8L12.3 1.6" fill="none" stroke="#0a32c8" stroke-width="2.1"/></svg>


<div class="btn" style="left:256px;top:181px;width:159px;height:26px"></div>

<svg class="abs" style="left:313px;top:209px" width="42" height="42" viewBox="1003 303 42 42"><path d="M1024 304.6L1041.4 325.3Q1042.2 327 1040.4 327H1034V341.6Q1034 343.6 1032 343.6H1016Q1014 343.6 1014 341.6V327H1007.6Q1005.8 327 1006.6 325.3Z" fill="#ed1c24"/></svg>
<svg class="abs" style="left:0;top:0" width="453" height="309" viewBox="690 94 453 309"><text x="734.6" y="114.3" font-size="14.5" fill="#f0f0f0" textLength="150.8" lengthAdjust="spacingAndGlyphs">Планы расположения</text>
<text x="712.3" y="163.2" font-size="17.5" fill="#5a78e2" textLength="90.3" lengthAdjust="spacingAndGlyphs">Раскладка</text>
<text x="818.0" y="163.2" font-size="17.5" fill="#b6b6b6" textLength="65.3" lengthAdjust="spacingAndGlyphs">Потоки</text>
<text x="898.5" y="163.2" font-size="17.5" fill="#b6b6b6" textLength="64.9" lengthAdjust="spacingAndGlyphs">Кабели</text>
<text x="717.4" y="195.2" font-size="13" fill="#111" textLength="117.2" lengthAdjust="spacingAndGlyphs">Способ прокладки:</text>
<text x="720.0" y="217.4" font-size="12" fill="#111" textLength="76.3" lengthAdjust="spacingAndGlyphs">&lt;Нет данных&gt;</text>
<text x="717.1" y="255.0" font-size="13" fill="#111" textLength="116.8" lengthAdjust="spacingAndGlyphs">Высотные отметки:</text>
<text x="720.0" y="276.5" font-size="12" fill="#111" textLength="7.0" lengthAdjust="spacingAndGlyphs" font-weight="bold">...</text>
<text x="858.5" y="275.9" font-size="12" fill="#111" textLength="65.0" lengthAdjust="spacingAndGlyphs" font-weight="bold">Разместить</text>
<text x="736.3" y="308.6" font-size="13" fill="#111" textLength="166.4" lengthAdjust="spacingAndGlyphs">Выделить участки с пустыми</text>
<text x="736.3" y="325.8" font-size="13" fill="#111" textLength="133.0" lengthAdjust="spacingAndGlyphs">высотными отметками</text>
<text x="715.8" y="382.0" font-size="12.5" fill="#111" textLength="188.3" lengthAdjust="spacingAndGlyphs">Масштаб активного листа: 1:250</text>
<text x="951.5" y="195.2" font-size="13" fill="#111" textLength="85.4" lengthAdjust="spacingAndGlyphs">Инструменты:</text>
<text x="956.3" y="216.6" font-size="12" fill="#111" textLength="138.6" lengthAdjust="spacingAndGlyphs" font-weight="bold">Разбить участок трассы</text>
<text x="970.6" y="244.0" font-size="13" fill="#111" textLength="109.1" lengthAdjust="spacingAndGlyphs">Сохранить способ</text>
<text x="970.6" y="261.2" font-size="13" fill="#111" textLength="61.9" lengthAdjust="spacingAndGlyphs">прокладки</text>
<text x="964.2" y="292.8" font-size="12" fill="#111" textLength="124.1" lengthAdjust="spacingAndGlyphs" font-weight="bold">Просмотр листа в 3D</text></svg>
</div>

<div id="win" class="abs">
<div id="wtitle" class="abs">
<svg class="abs" style="left:0;top:0" width="300" height="30" viewBox="27 315 300 30"><text x="35.3" y="336" font-size="15" fill="#f0f0f0" textLength="120.2" lengthAdjust="spacingAndGlyphs">3D Визуализация</text></svg>
<svg class="abs" style="left:540px;top:0" width="154" height="30" viewBox="0 0 154 30">
<path d="M8 17H16" stroke="#1e1e1e" stroke-width="1.5" fill="none"/><path d="M6.6 17l3.4-3v6zM17.4 17l-3.4-3v6z" fill="#1e1e1e"/>
<rect x="64.5" y="16" width="8.5" height="2.6" fill="#c4c4c4"/>
<path d="M98.8 11.2h7.6v7h-7.6z" fill="none" stroke="#d0d0d0" stroke-width="1.3"/><rect x="98.2" y="10.2" width="8.8" height="2.4" fill="#d0d0d0"/>
<path d="M133 10.5l8.4 8.6M141.4 10.5l-8.4 8.6" stroke="#ececec" stroke-width="1.9"/>
</svg>
</div>
<div id="wbody" class="abs">
<svg class="abs" style="left:-28px;top:-345px" width="1151" height="867" viewBox="0 0 1151 867">
<path d="M533.6 345H722V401Z" fill="#fff"/>
<path d="M520 341L721 400.8M520 342.9L721 406.4" stroke="#c6c6c6" stroke-width="1" fill="none"/>
<path d="M600.8 365.2l4-1.8M666.8 386l4-1.8" stroke="#b4b4b4" stroke-width="1" fill="none"/>
<ellipse cx="681.2" cy="827.5" rx="26.7" ry="17" fill="none" stroke="#b9b9b9" stroke-width="6.4"/>
<path d="M73.7 315.3 L111.3 336 L154.8 360 L205.8 388.2 L266.4 421.6 L339.6 461.9 L429.8 511.7 L543.8 574.5 L692.1 656.3 L893.4 767.3 L1181.9 926.4 L1630.3 1173.6 L2421.8 1610.1" stroke="#8e8e8e" stroke-width="1" fill="none"/>
<path d="M68.3 316.3 L105.6 337.2 L148.8 361.4 L199.5 389.7 L259.8 423.4 L332.8 464.2 L422.7 514.5 L536.5 578.2 L684.9 661.2 L886.7 774 L1177 936.4 L1630.4 1189.9 L2437.7 1641.4" stroke="#8e8e8e" stroke-width="1" fill="none"/>
<path d="M53.9 318.9 L90.5 340.2 L133 364.9 L182.9 393.9 L242.4 428.4 L314.5 470.3 L403.7 522.2 L516.9 587.9 L665.4 674.2 L868.6 792.2 L1163.6 963.6 L1630.7 1235 L2482.6 1730" stroke="#8e8e8e" stroke-width="1" fill="none"/>
<path d="M124.7 360 L41.7 378.1" stroke="#b2b2b2" stroke-width="1" fill="none"/>
<path d="M89.1 339.4 L9.8 355.1" stroke="#b2b2b2" stroke-width="1" fill="none"/>
<path d="M88.4 308 L91.9 309.9" stroke="#9a9a9a" stroke-width="0.9" fill="none"/>
<path d="M94 308.2 L86.2 309.6" stroke="#9a9a9a" stroke-width="0.9" fill="none"/>
<path d="M68 311.7 L71.4 313.6" stroke="#9a9a9a" stroke-width="0.9" fill="none"/>
<path d="M73.6 311.9 L65.6 313.3" stroke="#9a9a9a" stroke-width="0.9" fill="none"/>
<path d="M103.3 315.8 L107 317.7" stroke="#9a9a9a" stroke-width="0.9" fill="none"/>
<path d="M109 316 L101 317.4" stroke="#9a9a9a" stroke-width="0.9" fill="none"/>
<path d="M82.4 319.6 L86 321.6" stroke="#9a9a9a" stroke-width="0.9" fill="none"/>
<path d="M88.2 319.8 L80 321.3" stroke="#9a9a9a" stroke-width="0.9" fill="none"/>
<path d="M119 324 L122.9 326" stroke="#9a9a9a" stroke-width="0.9" fill="none"/>
<path d="M124.9 324.2 L116.7 325.7" stroke="#9a9a9a" stroke-width="0.9" fill="none"/>
<path d="M97.7 328.1 L101.5 330.2" stroke="#9a9a9a" stroke-width="0.9" fill="none"/>
<path d="M103.7 328.3 L95.4 329.9" stroke="#9a9a9a" stroke-width="0.9" fill="none"/>
<path d="M135.6 332.6 L139.7 334.8" stroke="#9a9a9a" stroke-width="0.9" fill="none"/>
<path d="M141.7 332.8 L133.4 334.5" stroke="#9a9a9a" stroke-width="0.9" fill="none"/>
<path d="M114 337 L118 339.2" stroke="#9a9a9a" stroke-width="0.9" fill="none"/>
<path d="M120.1 337.2 L111.6 338.9" stroke="#9a9a9a" stroke-width="0.9" fill="none"/>
<path d="M153.2 341.9 L157.6 344.2" stroke="#9a9a9a" stroke-width="0.9" fill="none"/>
<path d="M159.5 342.1 L151.1 343.8" stroke="#9a9a9a" stroke-width="0.9" fill="none"/>
<path d="M131.2 346.5 L135.5 348.8" stroke="#9a9a9a" stroke-width="0.9" fill="none"/>
<path d="M137.6 346.7 L128.9 348.5" stroke="#9a9a9a" stroke-width="0.9" fill="none"/>
<path d="M172 351.7 L176.7 354.1" stroke="#9a9a9a" stroke-width="0.9" fill="none"/>
<path d="M178.5 351.9 L169.9 353.8" stroke="#9a9a9a" stroke-width="0.9" fill="none"/>
<path d="M149.5 356.6 L154.1 359.1" stroke="#9a9a9a" stroke-width="0.9" fill="none"/>
<path d="M156.1 356.8 L147.3 358.7" stroke="#9a9a9a" stroke-width="0.9" fill="none"/>
<path d="M192 362.1 L197 364.7" stroke="#9a9a9a" stroke-width="0.9" fill="none"/>
<path d="M198.7 362.3 L190 364.4" stroke="#9a9a9a" stroke-width="0.9" fill="none"/>
<path d="M169.1 367.3 L174 370" stroke="#9a9a9a" stroke-width="0.9" fill="none"/>
<path d="M175.9 367.6 L166.9 369.7" stroke="#9a9a9a" stroke-width="0.9" fill="none"/>
<path d="M213.3 373.2 L218.7 376" stroke="#9a9a9a" stroke-width="0.9" fill="none"/>
<path d="M220.3 373.5 L211.4 375.7" stroke="#9a9a9a" stroke-width="0.9" fill="none"/>
<path d="M190 378.9 L195.3 381.7" stroke="#9a9a9a" stroke-width="0.9" fill="none"/>
<path d="M197.1 379.1 L187.9 381.3" stroke="#9a9a9a" stroke-width="0.9" fill="none"/>
<path d="M236.2 385.2 L241.9 388.2" stroke="#9a9a9a" stroke-width="0.9" fill="none"/>
<path d="M243.4 385.5 L234.4 387.8" stroke="#9a9a9a" stroke-width="0.9" fill="none"/>
<path d="M212.4 391.2 L218 394.3" stroke="#9a9a9a" stroke-width="0.9" fill="none"/>
<path d="M219.8 391.5 L210.4 393.9" stroke="#9a9a9a" stroke-width="0.9" fill="none"/>
<path d="M260.5 397.9 L266.6 401.1" stroke="#9a9a9a" stroke-width="0.9" fill="none"/>
<path d="M268 398.1 L258.8 400.6" stroke="#9a9a9a" stroke-width="0.9" fill="none"/>
<path d="M236.3 404.3 L242.3 407.6" stroke="#9a9a9a" stroke-width="0.9" fill="none"/>
<path d="M243.9 404.6 L234.4 407.2" stroke="#9a9a9a" stroke-width="0.9" fill="none"/>
<path d="M286.3 412 L292.9 415.4" stroke="#9a9a9a" stroke-width="0.9" fill="none"/>
<path d="M294.2 412.3 L284.8 415" stroke="#9a9a9a" stroke-width="0.9" fill="none"/>
<path d="M262.4 418.7 L269 422.3" stroke="#9a9a9a" stroke-width="0.9" fill="none"/>
<path d="M270.4 419 L260.7 421.8" stroke="#9a9a9a" stroke-width="0.9" fill="none"/>
<path d="M315.3 426.5 L322.5 430.2" stroke="#9a9a9a" stroke-width="0.9" fill="none"/>
<path d="M323.5 426.8 L313.9 429.7" stroke="#9a9a9a" stroke-width="0.9" fill="none"/>
<path d="M290.2 434 L297.3 437.9" stroke="#9a9a9a" stroke-width="0.9" fill="none"/>
<path d="M298.5 434.4 L288.6 437.4" stroke="#9a9a9a" stroke-width="0.9" fill="none"/>
<path d="M345.4 442.2 L353.2 446.3" stroke="#9a9a9a" stroke-width="0.9" fill="none"/>
<path d="M354 442.6 L344.3 445.7" stroke="#9a9a9a" stroke-width="0.9" fill="none"/>
<path d="M319.9 450.4 L327.6 454.6" stroke="#9a9a9a" stroke-width="0.9" fill="none"/>
<path d="M328.6 450.7 L318.5 454" stroke="#9a9a9a" stroke-width="0.9" fill="none"/>
<path d="M379 460.4 L387.4 464.9" stroke="#9a9a9a" stroke-width="0.9" fill="none"/>
<path d="M387.9 460.9 L378.1 464.3" stroke="#9a9a9a" stroke-width="0.9" fill="none"/>
<path d="M353.9 469 L362.2 473.6" stroke="#9a9a9a" stroke-width="0.9" fill="none"/>
<path d="M363 469.5 L352.7 473" stroke="#9a9a9a" stroke-width="0.9" fill="none"/>
<path d="M415.5 479.5 L424.7 484.4" stroke="#9a9a9a" stroke-width="0.9" fill="none"/>
<path d="M424.9 480 L414.9 483.7" stroke="#9a9a9a" stroke-width="0.9" fill="none"/>
<path d="M390 488.9 L399.1 494" stroke="#9a9a9a" stroke-width="0.9" fill="none"/>
<path d="M399.6 489.4 L389.1 493.3" stroke="#9a9a9a" stroke-width="0.9" fill="none"/>
<path d="M454.1 499.7 L464.2 505" stroke="#9a9a9a" stroke-width="0.9" fill="none"/>
<path d="M464 500.2 L453.9 504.3" stroke="#9a9a9a" stroke-width="0.9" fill="none"/>
<path d="M428.3 510 L438.3 515.5" stroke="#9a9a9a" stroke-width="0.9" fill="none"/>
<path d="M438.4 510.5 L427.8 514.8" stroke="#9a9a9a" stroke-width="0.9" fill="none"/>
<path d="M497.9 522.6 L509 528.4" stroke="#9a9a9a" stroke-width="0.9" fill="none"/>
<path d="M508.2 523.1 L498 527.6" stroke="#9a9a9a" stroke-width="0.9" fill="none"/>
<path d="M471.8 533.9 L482.8 540" stroke="#9a9a9a" stroke-width="0.9" fill="none"/>
<path d="M482.3 534.5 L471.7 539.2" stroke="#9a9a9a" stroke-width="0.9" fill="none"/>
<path d="M546.5 548 L558.8 554.5" stroke="#9a9a9a" stroke-width="0.9" fill="none"/>
<path d="M557.4 548.6 L547.2 553.6" stroke="#9a9a9a" stroke-width="0.9" fill="none"/>
<path d="M520.2 560.6 L532.4 567.3" stroke="#9a9a9a" stroke-width="0.9" fill="none"/>
<path d="M531.4 561.2 L520.6 566.4" stroke="#9a9a9a" stroke-width="0.9" fill="none"/>
<path d="M600.7 576.4 L614.4 583.6" stroke="#9a9a9a" stroke-width="0.9" fill="none"/>
<path d="M612.4 577.1 L602.1 582.6" stroke="#9a9a9a" stroke-width="0.9" fill="none"/>
<path d="M574.4 590.4 L588 597.9" stroke="#9a9a9a" stroke-width="0.9" fill="none"/>
<path d="M586.3 591.1 L575.4 596.9" stroke="#9a9a9a" stroke-width="0.9" fill="none"/>
<path d="M658.1 606.4 L673.3 614.4" stroke="#9a9a9a" stroke-width="0.9" fill="none"/>
<path d="M670.5 607.1 L660.2 613.3" stroke="#9a9a9a" stroke-width="0.9" fill="none"/>
<path d="M631.8 622 L647.1 630.4" stroke="#9a9a9a" stroke-width="0.9" fill="none"/>
<path d="M644.4 622.8 L633.6 629.3" stroke="#9a9a9a" stroke-width="0.9" fill="none"/>
<path d="M724.6 641.2 L741.7 650.1" stroke="#9a9a9a" stroke-width="0.9" fill="none"/>
<path d="M737.8 642 L727.7 648.9" stroke="#9a9a9a" stroke-width="0.9" fill="none"/>
<path d="M698.5 658.8 L715.8 668.3" stroke="#9a9a9a" stroke-width="0.9" fill="none"/>
<path d="M712.1 659.6 L701.4 667" stroke="#9a9a9a" stroke-width="0.9" fill="none"/>
<path d="M800.6 680.9 L820.1 691.1" stroke="#9a9a9a" stroke-width="0.9" fill="none"/>
<path d="M814.8 681.9 L804.9 689.7" stroke="#9a9a9a" stroke-width="0.9" fill="none"/>
<path d="M775.1 700.9 L794.8 711.8" stroke="#9a9a9a" stroke-width="0.9" fill="none"/>
<path d="M789.7 701.9 L779.3 710.3" stroke="#9a9a9a" stroke-width="0.9" fill="none"/>
<path d="M887 726.1 L909.4 737.8" stroke="#9a9a9a" stroke-width="0.9" fill="none"/>
<path d="M902.3 727.2 L892.9 736.2" stroke="#9a9a9a" stroke-width="0.9" fill="none"/>
<path d="M862.6 749.1 L885.3 761.6" stroke="#9a9a9a" stroke-width="0.9" fill="none"/>
<path d="M878.4 750.2 L868.4 759.9" stroke="#9a9a9a" stroke-width="0.9" fill="none"/>
<path d="M983.8 776.7 L1009.6 790.2" stroke="#9a9a9a" stroke-width="0.9" fill="none"/>
<path d="M1000.4 778 L991.7 788.4" stroke="#9a9a9a" stroke-width="0.9" fill="none"/>
<path d="M961 803.3 L987.3 817.7" stroke="#9a9a9a" stroke-width="0.9" fill="none"/>
<path d="M978.2 804.6 L968.8 815.8" stroke="#9a9a9a" stroke-width="0.9" fill="none"/>
<path d="M1097.6 836.2 L1127.7 852" stroke="#9a9a9a" stroke-width="0.9" fill="none"/>
<path d="M1115.7 837.7 L1108 849.8" stroke="#9a9a9a" stroke-width="0.9" fill="none"/>
<path d="M1077.3 867.2 L1108.1 884.2" stroke="#9a9a9a" stroke-width="0.9" fill="none"/>
<path d="M1096 868.8 L1087.8 881.9" stroke="#9a9a9a" stroke-width="0.9" fill="none"/>
<path d="M1233.9 907.5 L1269.6 926.2" stroke="#9a9a9a" stroke-width="0.9" fill="none"/>
<path d="M1253.9 909.2 L1247.8 923.7" stroke="#9a9a9a" stroke-width="0.9" fill="none"/>
<path d="M1217.4 944.4 L1254.4 964.7" stroke="#9a9a9a" stroke-width="0.9" fill="none"/>
<path d="M1238.2 946.2 L1231.6 962" stroke="#9a9a9a" stroke-width="0.9" fill="none"/>
<path d="M1393.4 990.9 L1436.4 1013.4" stroke="#9a9a9a" stroke-width="0.9" fill="none"/>
<path d="M1415.6 993 L1411.9 1010.3" stroke="#9a9a9a" stroke-width="0.9" fill="none"/>
<path d="M1382.7 1035.4 L1427.5 1060" stroke="#9a9a9a" stroke-width="0.9" fill="none"/>
<path d="M1406 1037.6 L1401.9 1056.7" stroke="#9a9a9a" stroke-width="0.9" fill="none"/>
<path d="M1582.4 1089.8 L1634.9 1117.2" stroke="#9a9a9a" stroke-width="0.9" fill="none"/>
<path d="M1607.4 1092.3 L1607.1 1113.5" stroke="#9a9a9a" stroke-width="0.9" fill="none"/>
<path d="M1580.4 1144.2 L1635.5 1174.5" stroke="#9a9a9a" stroke-width="0.9" fill="none"/>
<path d="M1606.6 1146.9 L1606.3 1170.4" stroke="#9a9a9a" stroke-width="0.9" fill="none"/>
<path d="M-21.5 332.6 L11 356.1 L49.2 383.5 L94.4 416 L148.8 455.2 L215.7 503.3 L299.8 563.8 L408.7 642.1 L555.5 747.7 L763.8 897.6 L1082.9 1127 L1632.6 1522.5 L2805.1 2365.9" stroke="#828282" stroke-width="1.05" fill="none"/>
<path d="M10.8 355.9 L-0.5 358.2" stroke="#8e8e8e" stroke-width="1" fill="none"/>
<path d="M-5.3 361.2 L-7.2 361.5 L-9.1 361.7 L-10.9 361.7 L-12.5 361.5 L-13.8 361.3 L-14.6 360.9 L-14.9 360.4 L-14.8 359.8 L-14.1 359.2 L-13 358.7 L-11.6 358.2 L-9.9 357.7 L-8 357.4 L-6.1 357.3 L-4.3 357.3 L-2.7 357.4 L-1.5 357.7 L-0.6 358.1 L-0.3 358.6 L-0.4 359.1 L-1 359.7 L-2.1 360.3 L-3.6 360.8 Z" stroke="#9c9c9c" stroke-width="0.9" fill="none"/>
<text transform="matrix(0.2671 0.2045 -0.8248 0.1646 -11.69 359.49)" font-size="11" fill="#9a9da3" textLength="6.1" lengthAdjust="spacingAndGlyphs">1</text>
<path d="M25.8 366.7 L14.2 369.1" stroke="#8e8e8e" stroke-width="1" fill="none"/>
<path d="M9.4 372.4 L7.5 372.7 L5.5 372.9 L3.6 372.9 L2 372.7 L0.7 372.4 L-0.2 372 L-0.6 371.5 L-0.5 370.9 L0.2 370.2 L1.3 369.6 L2.8 369.1 L4.5 368.7 L6.5 368.3 L8.4 368.2 L10.3 368.2 L11.9 368.3 L13.2 368.6 L14.1 369 L14.5 369.5 L14.4 370.1 L13.8 370.8 L12.7 371.4 L11.2 371.9 Z" stroke="#9c9c9c" stroke-width="0.9" fill="none"/>
<text transform="matrix(0.2855 0.2186 -0.8453 0.1759 2.72 370.53)" font-size="11" fill="#9a9da3" textLength="6.1" lengthAdjust="spacingAndGlyphs">2</text>
<path d="M41.9 378.2 L30 380.8" stroke="#8e8e8e" stroke-width="1" fill="none"/>
<path d="M25.2 384.3 L23.2 384.6 L21.1 384.8 L19.2 384.9 L17.5 384.7 L16.1 384.4 L15.2 383.9 L14.8 383.3 L14.9 382.7 L15.5 382 L16.6 381.4 L18.1 380.8 L19.9 380.3 L21.9 380 L23.9 379.8 L25.9 379.8 L27.6 379.9 L28.9 380.3 L29.8 380.7 L30.3 381.3 L30.2 381.9 L29.6 382.6 L28.5 383.2 L27 383.8 Z" stroke="#9c9c9c" stroke-width="0.9" fill="none"/>
<text transform="matrix(0.3059 0.2343 -0.8666 0.1885 18.15 382.34)" font-size="11" fill="#9a9da3" textLength="6.1" lengthAdjust="spacingAndGlyphs">3</text>
<path d="M59 390.6 L46.9 393.4" stroke="#8e8e8e" stroke-width="1" fill="none"/>
<path d="M42.1 397.1 L40 397.5 L37.9 397.7 L35.9 397.7 L34.1 397.5 L32.7 397.2 L31.7 396.7 L31.2 396.1 L31.3 395.4 L31.9 394.7 L33.1 394 L34.6 393.4 L36.5 392.9 L38.5 392.5 L40.6 392.3 L42.6 392.3 L44.3 392.4 L45.7 392.8 L46.7 393.3 L47.2 393.9 L47.2 394.6 L46.6 395.3 L45.5 396 L43.9 396.6 Z" stroke="#9c9c9c" stroke-width="0.9" fill="none"/>
<text transform="matrix(0.3286 0.2516 -0.8888 0.2025 34.69 395.01)" font-size="11" fill="#9a9da3" textLength="6.1" lengthAdjust="spacingAndGlyphs">4</text>
<path d="M77.5 403.9 L65 406.9" stroke="#8e8e8e" stroke-width="1" fill="none"/>
<path d="M60.2 410.9 L58.1 411.3 L56 411.5 L53.9 411.5 L52 411.4 L50.5 411 L49.5 410.4 L48.9 409.8 L49 409 L49.6 408.3 L50.7 407.5 L52.3 406.9 L54.2 406.3 L56.3 405.9 L58.4 405.7 L60.5 405.7 L62.3 405.9 L63.8 406.2 L64.9 406.8 L65.4 407.4 L65.4 408.1 L64.8 408.9 L63.7 409.7 L62.1 410.3 Z" stroke="#9c9c9c" stroke-width="0.9" fill="none"/>
<text transform="matrix(0.3539 0.2710 -0.9120 0.2181 52.48 408.63)" font-size="11" fill="#9a9da3" textLength="6.1" lengthAdjust="spacingAndGlyphs">5</text>
<path d="M97.4 418.2 L84.6 421.4" stroke="#8e8e8e" stroke-width="1" fill="none"/>
<path d="M79.9 425.8 L77.7 426.2 L75.4 426.4 L73.3 426.5 L71.3 426.3 L69.7 425.9 L68.6 425.3 L68.1 424.6 L68.1 423.8 L68.7 422.9 L69.8 422.1 L71.4 421.4 L73.3 420.8 L75.5 420.4 L77.7 420.2 L79.8 420.1 L81.8 420.3 L83.3 420.7 L84.5 421.3 L85 422 L85.1 422.8 L84.5 423.6 L83.4 424.4 L81.8 425.2 Z" stroke="#9c9c9c" stroke-width="0.9" fill="none"/>
<text transform="matrix(0.3822 0.2927 -0.9362 0.2356 71.67 423.33)" font-size="11" fill="#9a9da3" textLength="6.1" lengthAdjust="spacingAndGlyphs">6</text>
<path d="M118.9 433.7 L105.8 437.1" stroke="#8e8e8e" stroke-width="1" fill="none"/>
<path d="M101.1 441.9 L98.8 442.3 L96.5 442.6 L94.2 442.6 L92.2 442.4 L90.5 442 L89.3 441.3 L88.7 440.6 L88.7 439.7 L89.3 438.8 L90.4 437.9 L92 437.1 L94 436.5 L96.2 436 L98.5 435.8 L100.7 435.8 L102.8 436 L104.4 436.4 L105.6 437 L106.3 437.8 L106.3 438.6 L105.8 439.5 L104.7 440.4 L103.1 441.2 Z" stroke="#9c9c9c" stroke-width="0.9" fill="none"/>
<text transform="matrix(0.4141 0.3171 -0.9613 0.2553 92.42 439.22)" font-size="11" fill="#9a9da3" textLength="6.1" lengthAdjust="spacingAndGlyphs">7</text>
<path d="M142.2 450.4 L128.7 454.2" stroke="#8e8e8e" stroke-width="1" fill="none"/>
<path d="M124.1 459.3 L121.8 459.9 L119.4 460.1 L117 460.2 L114.9 459.9 L113.1 459.4 L111.9 458.8 L111.2 457.9 L111.1 457 L111.6 456 L112.8 455.1 L114.4 454.2 L116.4 453.5 L118.7 453 L121.1 452.7 L123.4 452.7 L125.5 452.9 L127.3 453.4 L128.6 454.1 L129.3 454.9 L129.4 455.8 L128.9 456.8 L127.8 457.8 L126.2 458.6 Z" stroke="#9c9c9c" stroke-width="0.9" fill="none"/>
<text transform="matrix(0.4501 0.3447 -0.9874 0.2775 114.93 456.45)" font-size="11" fill="#9a9da3" textLength="6.1" lengthAdjust="spacingAndGlyphs">8</text>
<path d="M167.6 468.6 L153.7 472.8" stroke="#8e8e8e" stroke-width="1" fill="none"/>
<path d="M149.2 478.4 L146.8 478.9 L144.3 479.2 L141.9 479.3 L139.6 479 L137.7 478.5 L136.4 477.7 L135.6 476.8 L135.5 475.8 L136 474.7 L137.1 473.7 L138.8 472.8 L140.8 472 L143.2 471.5 L145.6 471.2 L148.1 471.1 L150.3 471.4 L152.1 471.9 L153.5 472.6 L154.3 473.5 L154.5 474.5 L154 475.6 L152.9 476.6 L151.3 477.6 Z" stroke="#9c9c9c" stroke-width="0.9" fill="none"/>
<text transform="matrix(0.4911 0.3761 -1.0145 0.3027 139.44 475.22)" font-size="11" fill="#9a9da3" textLength="6.1" lengthAdjust="spacingAndGlyphs">9</text>
<path d="M195.2 488.5 L181 493.1" stroke="#8e8e8e" stroke-width="1" fill="none"/>
<path d="M176.7 499.2 L174.2 499.8 L171.6 500.1 L169 500.2 L166.7 499.9 L164.7 499.3 L163.2 498.5 L162.3 497.5 L162.1 496.4 L162.6 495.2 L163.7 494.1 L165.4 493.1 L167.5 492.2 L169.9 491.6 L172.5 491.3 L175 491.3 L177.3 491.5 L179.3 492.1 L180.8 492.9 L181.7 493.9 L181.9 495 L181.5 496.2 L180.4 497.3 L178.8 498.3 Z" stroke="#9c9c9c" stroke-width="0.9" fill="none"/>
<text transform="matrix(0.5379 0.4119 -1.0424 0.3316 165.05 494.84)" font-size="11" fill="#9a9da3" textLength="10.5" lengthAdjust="spacingAndGlyphs">10</text>
<path d="M225.5 510.3 L210.9 515.3" stroke="#8e8e8e" stroke-width="1" fill="none"/>
<path d="M206.8 522 L204.3 522.7 L201.6 523.1 L198.9 523.1 L196.3 522.8 L194.2 522.2 L192.6 521.3 L191.6 520.2 L191.3 518.9 L191.8 517.7 L192.8 516.4 L194.5 515.3 L196.7 514.4 L199.2 513.7 L201.9 513.4 L204.5 513.3 L207 513.6 L209.1 514.2 L210.7 515.1 L211.7 516.2 L212.1 517.4 L211.7 518.7 L210.6 520 L209 521.1 Z" stroke="#9c9c9c" stroke-width="0.9" fill="none"/>
<text transform="matrix(0.5917 0.4531 -1.0711 0.3648 194.33 517.26)" font-size="11" fill="#9a9da3" textLength="10.5" lengthAdjust="spacingAndGlyphs">11</text>
<path d="M258.9 534.3 L243.9 539.8" stroke="#8e8e8e" stroke-width="1" fill="none"/>
<path d="M240 547.3 L237.4 548 L234.6 548.4 L231.8 548.4 L229.1 548.1 L226.8 547.4 L225.1 546.4 L224 545.2 L223.6 543.8 L223.9 542.4 L225 541 L226.7 539.8 L228.9 538.8 L231.5 538.1 L234.2 537.7 L237 537.6 L239.6 538 L241.9 538.6 L243.7 539.6 L244.8 540.8 L245.2 542.2 L245 543.6 L243.9 545 L242.3 546.2 Z" stroke="#9c9c9c" stroke-width="0.9" fill="none"/>
<text transform="matrix(0.6540 0.5008 -1.1004 0.4033 226.60 541.97)" font-size="11" fill="#9a9da3" textLength="10.5" lengthAdjust="spacingAndGlyphs">12</text>
<path d="M295.8 560.9 L280.4 566.9" stroke="#8e8e8e" stroke-width="1" fill="none"/>
<path d="M276.9 575.2 L274.2 576.1 L271.3 576.5 L268.3 576.5 L265.4 576.2 L263 575.4 L261.1 574.3 L259.8 572.9 L259.3 571.4 L259.6 569.8 L260.6 568.3 L262.3 566.9 L264.5 565.8 L267.2 565 L270.1 564.6 L273 564.5 L275.8 564.9 L278.2 565.6 L280.1 566.7 L281.4 568 L282 569.5 L281.8 571.1 L280.8 572.7 L279.2 574.1 Z" stroke="#9c9c9c" stroke-width="0.9" fill="none"/>
<text transform="matrix(0.7268 0.5565 -1.1298 0.4482 262.35 569.34)" font-size="11" fill="#9a9da3" textLength="10.5" lengthAdjust="spacingAndGlyphs">13</text>
<path d="M336.8 590.4 L321.1 597.1" stroke="#8e8e8e" stroke-width="1" fill="none"/>
<path d="M318 606.4 L315.2 607.3 L312.2 607.8 L309 607.9 L306 607.5 L303.3 606.6 L301.2 605.4 L299.7 603.8 L299.1 602.1 L299.2 600.4 L300.2 598.7 L301.9 597.1 L304.2 595.9 L306.9 595 L310 594.5 L313 594.5 L316 594.9 L318.6 595.7 L320.8 596.9 L322.2 598.4 L323 600.1 L322.9 601.8 L322 603.5 L320.3 605.1 Z" stroke="#9c9c9c" stroke-width="0.9" fill="none"/>
<text transform="matrix(0.8123 0.6221 -1.1591 0.5010 302.16 599.83)" font-size="11" fill="#9a9da3" textLength="10.5" lengthAdjust="spacingAndGlyphs">14</text>
<path d="M382.6 623.4 L366.6 631" stroke="#8e8e8e" stroke-width="1" fill="none"/>
<path d="M364.2 641.4 L361.3 642.4 L358.1 643 L354.7 643.1 L351.5 642.6 L348.6 641.6 L346.2 640.2 L344.6 638.5 L343.7 636.6 L343.7 634.6 L344.6 632.7 L346.3 631 L348.6 629.6 L351.4 628.6 L354.6 628 L357.9 628 L361 628.4 L363.9 629.4 L366.2 630.7 L367.9 632.4 L368.8 634.3 L368.9 636.2 L368.1 638.2 L366.5 639.9 Z" stroke="#9c9c9c" stroke-width="0.9" fill="none"/>
<text transform="matrix(0.9139 0.6999 -1.1872 0.5637 346.77 633.99)" font-size="11" fill="#9a9da3" textLength="10.5" lengthAdjust="spacingAndGlyphs">15</text>
<path d="M434.3 660.5 L418 669.1" stroke="#8e8e8e" stroke-width="1" fill="none"/>
<path d="M416.3 680.9 L413.3 682.1 L409.9 682.8 L406.4 682.8 L402.9 682.3 L399.7 681.2 L397.1 679.6 L395.2 677.7 L394.1 675.5 L393.9 673.2 L394.7 671.1 L396.3 669.1 L398.7 667.5 L401.6 666.4 L404.9 665.8 L408.4 665.7 L411.8 666.3 L414.9 667.3 L417.5 668.8 L419.5 670.7 L420.6 672.8 L420.9 675.1 L420.2 677.3 L418.6 679.3 Z" stroke="#9c9c9c" stroke-width="0.9" fill="none"/>
<text transform="matrix(1.0359 0.7932 -1.2133 0.6389 397.12 672.55)" font-size="11" fill="#9a9da3" textLength="10.5" lengthAdjust="spacingAndGlyphs">16</text>
<path d="M492.9 702.7 L476.3 712.5" stroke="#8e8e8e" stroke-width="1" fill="none"/>
<path d="M475.7 726 L472.6 727.3 L469.1 728.1 L465.3 728.1 L461.5 727.5 L458 726.3 L455 724.4 L452.8 722.2 L451.4 719.8 L451 717.2 L451.6 714.7 L453.2 712.5 L455.5 710.7 L458.6 709.4 L462 708.7 L465.7 708.6 L469.4 709.2 L472.9 710.4 L475.8 712.1 L478.1 714.3 L479.5 716.7 L480 719.3 L479.5 721.8 L478 724.1 Z" stroke="#9c9c9c" stroke-width="0.9" fill="none"/>
<text transform="matrix(1.1839 0.9066 -1.2354 0.7303 454.37 716.39)" font-size="11" fill="#9a9da3" textLength="10.5" lengthAdjust="spacingAndGlyphs">17</text>
<path d="M560 750.9 L543.2 762.2" stroke="#8e8e8e" stroke-width="1" fill="none"/>
<path d="M544 777.7 L540.8 779.3 L537.1 780.2 L533 780.3 L528.8 779.5 L525 778.1 L521.6 776 L518.9 773.4 L517.2 770.6 L516.6 767.6 L517 764.8 L518.4 762.2 L520.7 760.1 L523.8 758.6 L527.5 757.8 L531.5 757.7 L535.5 758.4 L539.3 759.8 L542.6 761.8 L545.3 764.3 L547.1 767.1 L547.9 770 L547.6 772.9 L546.3 775.6 Z" stroke="#9c9c9c" stroke-width="0.9" fill="none"/>
<text transform="matrix(1.3662 1.0462 -1.2510 0.8428 520.06 766.69)" font-size="11" fill="#9a9da3" textLength="10.5" lengthAdjust="spacingAndGlyphs">18</text>
<path d="M637.4 806.6 L620.7 819.8" stroke="#8e8e8e" stroke-width="1" fill="none"/>
<path d="M623.3 837.9 L620.1 839.7 L616.1 840.7 L611.7 840.8 L607.1 840 L602.8 838.3 L598.9 835.8 L595.7 832.9 L593.6 829.5 L592.5 826.1 L592.6 822.8 L593.9 819.8 L596.2 817.3 L599.4 815.6 L603.2 814.7 L607.5 814.6 L611.9 815.4 L616.2 817 L620 819.3 L623.2 822.2 L625.4 825.5 L626.6 828.9 L626.7 832.3 L625.5 835.3 Z" stroke="#9c9c9c" stroke-width="0.9" fill="none"/>
<text transform="matrix(1.5940 1.2207 -1.2559 0.9834 596.19 824.99)" font-size="11" fill="#9a9da3" textLength="10.5" lengthAdjust="spacingAndGlyphs">19</text>
<path d="M727.9 871.7 L711.4 887.2" stroke="#8e8e8e" stroke-width="1" fill="none"/>
<path d="M716.5 908.6 L713.3 910.8 L709.1 912 L704.3 912.1 L699.2 911.1 L694.3 909.1 L689.7 906.2 L686 902.7 L683.2 898.7 L681.6 894.6 L681.4 890.7 L682.3 887.2 L684.5 884.3 L687.8 882.3 L691.8 881.2 L696.5 881.1 L701.4 882 L706.2 883.9 L710.7 886.6 L714.5 890.1 L717.3 893.9 L719.1 898 L719.5 902 L718.7 905.6 Z" stroke="#9c9c9c" stroke-width="0.9" fill="none"/>
<text transform="matrix(1.8840 1.4427 -1.2435 1.1623 685.47 893.36)" font-size="11" fill="#9a9da3" textLength="10.5" lengthAdjust="spacingAndGlyphs">20</text>
<path d="M-9.6 606.1 L24 651.1 L63.4 703.9 L110.2 766.5 L166.6 842 L235.9 934.8 L323.3 1051.7 L436.7 1203.5 L589.8 1408.5 L515.5 1507.3 L429.7 1621.5 L329.5 1754.9 L210.8 1912.7 L68.3 2102.4 L-106.4 2334.8 L-325.2 2625.9 L-607.4 3001.5" stroke="#828282" stroke-width="1.05" fill="none"/>
<path d="M526 490.2 L703.8 574.5 L688.9 583.2 L511.1 496.4 Z" stroke="#8e8e8e" stroke-width="1" fill="none"/>
<path d="M569.1 510.7 L554.2 517.4" stroke="#8e8e8e" stroke-width="1" fill="none"/>
<path d="M632.8 540.8 L617.8 548.5" stroke="#8e8e8e" stroke-width="1" fill="none"/>
<path d="M764.9 603.4 L934.2 683.7 L920.8 696.3 L750.3 613.1 Z" stroke="#8e8e8e" stroke-width="1" fill="none"/>
<path d="M832.9 635.7 L818.6 646.5" stroke="#8e8e8e" stroke-width="1" fill="none"/>
<text transform="matrix(0.8803 0.4259 -0.7911 0.3429 524.08 498.69)" font-size="11" fill="#9a9da3" textLength="29" lengthAdjust="spacingAndGlyphs">Аналог</text>
<text transform="matrix(0.9745 0.4715 -0.7934 0.3797 581.36 526.41)" font-size="11" fill="#9a9da3" textLength="13" lengthAdjust="spacingAndGlyphs">К-1</text>
<text transform="matrix(1.1085 0.5363 -0.7904 0.4319 648.12 558.71)" font-size="11" fill="#9a9da3" textLength="14" lengthAdjust="spacingAndGlyphs">К-4</text>
<text transform="matrix(1.3938 0.6743 -0.7647 0.5431 768.29 616.85)" font-size="11" fill="#9a9da3" textLength="29" lengthAdjust="spacingAndGlyphs">Аналог</text>
<text transform="matrix(1.5848 0.7668 -0.7359 0.6176 859.50 660.98)" font-size="11" fill="#9a9da3" textLength="13" lengthAdjust="spacingAndGlyphs">К-1</text>
<path d="M89.5 494.9 L187.7 580.9 L163.6 590.1 L124.9 554.2 L102.3 562.1 L46.8 507.8 Z" stroke="#8e8e8e" stroke-width="1" fill="none"/>
<path d="M112.9 515.4 L68.9 529.4" stroke="#8e8e8e" stroke-width="1" fill="none"/>
<path d="M148.1 546.2 L124.9 554.2" stroke="#8e8e8e" stroke-width="1" fill="none"/>
<path d="M90.6 522.5 L124.9 554.2" stroke="#8e8e8e" stroke-width="1" fill="none"/>
<text transform="matrix(0.4711 0.4408 -1.1473 0.3549 68.18 506.58)" font-size="11" fill="#9a9da3" textLength="29" lengthAdjust="spacingAndGlyphs">Аналог</text>
<text transform="matrix(0.5305 0.4828 -1.1704 0.3887 110.58 532.14)" font-size="11" fill="#9a9da3" textLength="13" lengthAdjust="spacingAndGlyphs">К-1</text>
<text transform="matrix(0.5169 0.4978 -1.2060 0.4008 88.10 539.53)" font-size="11" fill="#9a9da3" textLength="14" lengthAdjust="spacingAndGlyphs">К-5</text>
<text transform="matrix(0.6031 0.5488 -1.2176 0.4419 146.29 564.63)" font-size="11" fill="#9a9da3" textLength="14" lengthAdjust="spacingAndGlyphs">К-3</text>
<path d="M316.2 478.3 L166 551.3" stroke="#8e8e8e" stroke-width="1" fill="none"/>
<path d="M372 508.9 L526 490.2" stroke="#9c9c9c" stroke-width="0.9" fill="none" stroke-dasharray="2 1.3"/>
<path d="M584.5 632.8 L764.9 603.4" stroke="#9c9c9c" stroke-width="0.9" fill="none" stroke-dasharray="2 1.3"/>
<path d="M279.3 471.8 L89.5 494.9" stroke="#9c9c9c" stroke-width="0.9" fill="none" stroke-dasharray="2 1.3"/>
<path d="M318.9 473.3 L315.6 482.2" stroke="#8e8e8e" stroke-width="1" fill="none"/>
<path d="M372.3 504 L369.3 514" stroke="#8e8e8e" stroke-width="1" fill="none"/>
<path d="M580.6 624.7 L582.5 641.1" stroke="#8e8e8e" stroke-width="1" fill="none"/>
<text transform="matrix(0.6360 0.5412 -1.1794 0.4358 173.22 553.16)" font-size="12" fill="#555" textLength="43" lengthAdjust="spacingAndGlyphs" font-weight="bold">Поток 2</text>
<path d="M166 551.3 L199.8 580.4" stroke="#8e8e8e" stroke-width="1" fill="none"/>
<text transform="matrix(0.4782 0.2314 -0.7207 0.1862 270.34 375.98)" font-size="12" fill="#555" textLength="43" lengthAdjust="spacingAndGlyphs" font-weight="bold">Поток 1</text>
<path d="M220.2 383.5 L266.1 375.8 L292 388.4" stroke="#8e8e8e" stroke-width="1" fill="none"/>
<path d="M308.4 469.6 L302.6 471.5 L310.7 476.3 L316.6 474.4" stroke="#8e8e8e" stroke-width="1" fill="none"/>
<path d="M333.5 484.3 L327.6 486.3 L336.4 491.5 L342.2 489.4" stroke="#8e8e8e" stroke-width="1" fill="none"/>
<path d="M376.3 509.8 L391.4 518.6" stroke="#8e8e8e" stroke-width="1" fill="none"/>
<path d="M378.2 510.8 L372.6 513 L382.4 518.8 L388 516.6" stroke="#8e8e8e" stroke-width="1" fill="none"/>
<path d="M416.4 533.3 L432.3 542.5" stroke="#8e8e8e" stroke-width="1" fill="none"/>
<path d="M418.9 534.7 L413.3 537 L424.1 543.4 L429.7 541" stroke="#8e8e8e" stroke-width="1" fill="none"/>
<path d="M485.4 573.6 L503.9 584.5" stroke="#8e8e8e" stroke-width="1" fill="none"/>
<path d="M488.3 575.3 L482.6 578 L495.2 585.5 L501 582.7" stroke="#8e8e8e" stroke-width="1" fill="none"/>
<path d="M537.9 604.4 L559.2 616.8" stroke="#8e8e8e" stroke-width="1" fill="none"/>
<path d="M541.1 606.2 L535.4 609.3 L549.5 617.7 L555.3 614.5" stroke="#8e8e8e" stroke-width="1" fill="none"/>
<path d="M595.6 638.1 L620.1 652.4" stroke="#8e8e8e" stroke-width="1" fill="none"/>
<path d="M600.4 640.9 L594.6 644.4 L610.6 653.8 L616.3 650.3" stroke="#8e8e8e" stroke-width="1" fill="none"/>
<path d="M329.3 513.6 L333.9 516.5 L321.3 521.2 L316.7 518.2 Z" stroke="#8e8e8e" stroke-width="1" fill="none"/>
<path d="M332.3 512.1 L312.9 519.3" stroke="#8e8e8e" stroke-width="1" fill="none"/>
<path d="M433.1 578.5 L439 582.2 L425.8 588.4 L419.9 584.5 Z" stroke="#8e8e8e" stroke-width="1" fill="none"/>
<path d="M436.1 576.6 L415.9 585.9" stroke="#8e8e8e" stroke-width="1" fill="none"/>
<path d="M594.2 679.4 L602.6 684.7 L589.1 693.3 L580.7 687.9 Z" stroke="#8e8e8e" stroke-width="1" fill="none"/>
<path d="M597.2 676.8 L576.4 689.8" stroke="#8e8e8e" stroke-width="1" fill="none"/>
<path d="M279.2 460.5 L303.5 475 L290.8 479.2 L266.7 464.5 Z" stroke="none" fill="#8a8a8a"/>
<path d="M280.4 462 L301 474.3 L279.9 471.5 Z" stroke="none" fill="#f4f4f4"/>
<path d="M316.4 461.1 L315.6 461.3 L314.7 461.4 L313.8 461.4 L313 461.3 L312.2 461.1 L311.6 460.8 L311.2 460.5 L311 460.2 L311 459.8 L311.3 459.4 L311.8 459.1 L312.4 458.8 L313.2 458.6 L314.1 458.5 L314.9 458.5 L315.8 458.6 L316.5 458.8 L317.1 459 L317.6 459.4 L317.8 459.7 L317.7 460.1 L317.5 460.5 L317 460.8 Z" stroke="none" fill="#8a8a8a"/>
<path d="M302.3 529 L300.9 529.4 L299.5 529.6 L298 529.6 L296.5 529.5 L295.3 529.1 L294.2 528.6 L293.6 528 L293.3 527.3 L293.3 526.5 L293.8 525.8 L294.6 525.2 L295.7 524.6 L297.1 524.3 L298.5 524.1 L300 524 L301.5 524.2 L302.7 524.6 L303.7 525.1 L304.4 525.7 L304.7 526.4 L304.7 527.1 L304.2 527.8 L303.4 528.5 Z" stroke="#b06060" stroke-width="0.7" stroke-dasharray="1.5 1" fill="#f07878"/>
<path d="M406.1 598.5 L404.6 599 L403 599.3 L401.3 599.3 L399.6 599.1 L398.1 598.6 L396.8 598 L395.9 597.2 L395.3 596.2 L395.3 595.3 L395.6 594.4 L396.4 593.5 L397.6 592.8 L399 592.4 L400.6 592.1 L402.3 592.1 L404 592.3 L405.5 592.7 L406.8 593.4 L407.7 594.2 L408.2 595.1 L408.3 596.1 L408 597 L407.2 597.8 Z" stroke="#b06060" stroke-width="0.7" stroke-dasharray="1.5 1" fill="#f07878"/>
<path d="M568.7 707.5 L567.1 708.2 L565.3 708.6 L563.2 708.6 L561.1 708.3 L559.2 707.6 L557.4 706.7 L556 705.5 L555.1 704.2 L554.7 702.9 L554.8 701.5 L555.5 700.4 L556.6 699.4 L558.1 698.7 L560 698.3 L562 698.3 L564 698.6 L566 699.2 L567.7 700.2 L569.1 701.3 L570.1 702.6 L570.5 704 L570.4 705.3 L569.8 706.5 Z" stroke="#b06060" stroke-width="0.7" stroke-dasharray="1.5 1" fill="#f07878"/>
<path d="M84.4 354.3L90.0 353.1L89.6 351.4L84.1 352.6ZM90.0 353.1L95.5 352.0L95.2 350.3L89.6 351.4ZM95.5 352.0L101.0 350.8L100.7 349.1L95.2 350.3ZM101.0 350.8L106.5 349.7L106.1 348.0L100.7 349.1ZM106.5 349.7L111.9 348.6L111.5 346.9L106.1 348.0ZM111.9 348.6L117.2 347.4L116.9 345.8L111.5 346.9ZM117.2 347.4L122.6 346.3L122.2 344.7L116.9 345.8ZM122.6 346.3L127.9 345.2L127.5 343.6L122.2 344.7ZM127.9 345.2L133.1 344.1L132.8 342.5L127.5 343.6ZM133.1 344.1L138.4 343.0L138.0 341.4L132.8 342.5ZM137.8 343.0L153.2 351.3L154.0 349.7L138.6 341.5ZM153.2 351.3L169.5 360.0L170.3 358.5L154.0 349.7ZM169.5 360.0L186.7 369.3L187.6 367.7L170.3 358.5ZM186.7 369.3L204.9 379.1L205.8 377.4L187.6 367.7ZM204.9 379.1L224.2 389.5L225.1 387.8L205.8 377.4ZM224.2 389.5L244.7 400.5L245.7 398.7L225.1 387.8ZM244.7 400.5L266.5 412.2L267.5 410.4L245.7 398.7ZM266.5 412.2L289.8 424.7L290.8 422.9L267.5 410.4ZM289.8 424.7L314.6 438.1L315.7 436.2L290.8 422.9ZM314.6 438.1L341.2 452.4L342.3 450.4L315.7 436.2ZM341.4 450.3L335.9 452.1L336.6 454.3L342.1 452.5ZM335.9 452.1L330.4 453.9L331.1 456.1L336.6 454.3ZM330.4 453.9L324.8 455.7L325.5 457.9L331.1 456.1ZM324.8 455.7L319.2 457.6L319.9 459.7L325.5 457.9ZM319.2 457.6L313.5 459.4L314.2 461.6L319.9 459.7ZM313.5 459.4L307.8 461.3L308.5 463.5L314.2 461.6ZM307.8 461.3L302.0 463.1L302.7 465.3L308.5 463.5ZM302.0 463.1L296.2 465.0L296.9 467.2L302.7 465.3ZM296.2 465.0L290.3 466.9L291.0 469.2L296.9 467.2ZM290.3 466.9L284.4 468.9L285.1 471.1L291.0 469.2Z" fill="#c180c8"/>
<circle cx="84.2" cy="353.4" r="0.87" fill="#c180c8"/>
<circle cx="284.7" cy="470.0" r="1.17" fill="#c180c8"/>
<circle cx="138.2" cy="342.2" r="0.84" fill="#c180c8"/>
<circle cx="341.8" cy="451.4" r="1.13" fill="#c180c8"/>
<path d="M295.7 466.4L319.4 480.4L320.6 478.3L296.9 464.4ZM319.4 480.4L344.7 495.3L346.0 493.1L320.6 478.3ZM344.7 495.3L371.7 511.2L373.0 509.0L346.0 493.1ZM371.7 511.2L400.7 528.3L402.0 526.0L373.0 509.0ZM400.7 528.3L431.7 546.7L433.1 544.3L402.0 526.0ZM431.7 546.7L465.2 566.4L466.7 564.0L433.1 544.3ZM465.2 566.4L501.4 587.8L502.9 585.2L466.7 564.0ZM501.4 587.8L540.6 610.9L542.2 608.3L502.9 585.2ZM540.6 610.9L583.2 636.1L584.8 633.3L542.2 608.3ZM583.2 636.1L629.7 663.5L631.4 660.6L584.8 633.3ZM629.7 660.7L623.4 664.6L625.2 667.5L631.4 663.5ZM623.4 664.6L617.0 668.6L618.9 671.5L625.2 667.5ZM617.0 668.6L610.6 672.7L612.5 675.6L618.9 671.5ZM610.6 672.7L604.1 676.8L606.0 679.7L612.5 675.6ZM604.1 676.8L597.5 680.9L599.4 683.9L606.0 679.7ZM597.5 680.9L590.9 685.1L592.7 688.1L599.4 683.9ZM590.9 685.1L584.1 689.4L586.0 692.4L592.7 688.1ZM584.1 689.4L577.2 693.7L579.1 696.7L586.0 692.4ZM577.2 693.7L570.3 698.1L572.2 701.1L579.1 696.7ZM570.3 698.1L563.3 702.6L565.2 705.6L572.2 701.1Z" fill="#c180c8"/>
<circle cx="296.3" cy="465.4" r="1.16" fill="#c180c8"/>
<circle cx="564.2" cy="704.1" r="1.78" fill="#c180c8"/>
<circle cx="630.5" cy="662.1" r="1.67" fill="#c180c8"/>
<path d="M361.0 502.5L299.0 525.6L299.9 528.0L361.9 504.9Z" fill="#c180c8"/>
<circle cx="361.5" cy="503.7" r="1.26" fill="#c180c8"/>
<circle cx="299.4" cy="526.8" r="1.32" fill="#c180c8"/>
<path d="M466.5 564.6L401.7 594.3L402.9 597.0L467.7 567.1Z" fill="#c180c8"/>
<circle cx="467.1" cy="565.9" r="1.42" fill="#c180c8"/>
<circle cx="402.3" cy="595.7" r="1.50" fill="#c180c8"/>
<path d="M151.2 347.3 L153.7 348.6 L148.6 349.7 L146.2 348.4 Z" stroke="#9a9a9a" stroke-width="0.8" fill="#fff"/>
<path d="M175 360 L177.7 361.4 L172.6 362.6 L169.9 361.2 Z" stroke="#9a9a9a" stroke-width="0.8" fill="#fff"/>
<path d="M200.8 373.8 L203.8 375.4 L198.5 376.6 L195.6 375 Z" stroke="#9a9a9a" stroke-width="0.8" fill="#fff"/>
<path d="M229 388.8 L232.2 390.5 L226.8 391.9 L223.6 390.2 Z" stroke="#9a9a9a" stroke-width="0.8" fill="#fff"/>
<path d="M259.7 405.2 L263.2 407 L257.7 408.5 L254.2 406.7 Z" stroke="#9a9a9a" stroke-width="0.8" fill="#fff"/>
<path d="M293.4 423.1 L297.2 425.2 L291.6 426.8 L287.7 424.8 Z" stroke="#9a9a9a" stroke-width="0.8" fill="#fff"/>
<path d="M330.5 442.9 L334.7 445.2 L329 447 L324.7 444.7 Z" stroke="#9a9a9a" stroke-width="0.8" fill="#fff"/>
<path d="M297.9 464.3 L300.6 465.8 L296.4 467.2 L293.8 465.6 Z" stroke="none" fill="#f08cf0"/>
<path d="M348.1 494.3 L350.7 495.8 L347.2 497.1 L344.7 495.6 Z" stroke="none" fill="#f08cf0"/>
<path d="M361.7 501.9 L365.3 504 L361.2 505.6 L357.6 503.4 Z" stroke="none" fill="#f08cf0"/>
<path d="M467 563.7 L471.5 566.3 L467.2 568.2 L462.8 565.6 Z" stroke="none" fill="#f08cf0"/>
<text transform="matrix(0.5208 0.2718 -0.7791 0.2188 276.03 405.85)" font-size="10" fill="#8f939a" textLength="31" lengthAdjust="spacingAndGlyphs">+3.000</text>
<path d="M291.9 416.2 L275.4 407.5 L265.6 410.2" stroke="#8e8e8e" stroke-width="1" fill="none"/>
<path d="M268.2 408.4 L265.2 410.3 L270.9 409.8" stroke="#8e8e8e" stroke-width="1" fill="none"/>
<text transform="matrix(0.6551 0.3590 -0.8498 0.2890 343.09 461.24)" font-size="10" fill="#8f939a" textLength="28" lengthAdjust="spacingAndGlyphs">-2.000</text>
<path d="M342.4 461.8 L317.3 460.5" stroke="#8e8e8e" stroke-width="1" fill="none"/>
<path d="M323.7 461.7 L317 460.5 L324.4 460.1 Z" stroke="none" fill="#8a8a8a"/>
<text transform="matrix(0.6691 0.3818 -0.8816 0.3074 334.49 473.96)" font-size="10" fill="#8f939a" textLength="30.5" lengthAdjust="spacingAndGlyphs">+1.000</text>
<path d="M354.5 488.5 L333.4 476.4 L322.2 480.2" stroke="#8e8e8e" stroke-width="1" fill="none"/>
<path d="M325 477.7 L321.8 480.3 L328.4 479.7" stroke="#8e8e8e" stroke-width="1" fill="none"/>
<text transform="matrix(0.8261 0.4714 -0.9129 0.3796 419.00 522.19)" font-size="10" fill="#8f939a" textLength="30.5" lengthAdjust="spacingAndGlyphs">+1.000</text>
<path d="M444.6 540.3 L417.6 524.8 L406 529.5" stroke="#8e8e8e" stroke-width="1" fill="none"/>
<path d="M408.6 526.4 L405.6 529.7 L412.8 528.8" stroke="#8e8e8e" stroke-width="1" fill="none"/>
<text transform="matrix(1.0743 0.6130 -0.9345 0.4937 537.22 589.65)" font-size="10" fill="#8f939a" textLength="30.5" lengthAdjust="spacingAndGlyphs">+1.000</text>
<path d="M570.9 612.9 L536.8 593.3 L525 599.4" stroke="#8e8e8e" stroke-width="1" fill="none"/>
<path d="M527 595.4 L524.5 599.7 L532.5 598.5" stroke="#8e8e8e" stroke-width="1" fill="none"/>
<text transform="matrix(0.3859 0.2014 -0.7210 0.1621 177.70 354.53)" font-size="10" fill="#8f939a" textLength="31" lengthAdjust="spacingAndGlyphs">+3.000</text>
<path d="M189 362.2 L176.8 355.8 L167.7 357.8" stroke="#8e8e8e" stroke-width="1" fill="none"/>
<text transform="matrix(0.5290 0.3213 -0.8771 0.2586 231.15 439.55)" font-size="12" fill="#d88a80" textLength="20.8" lengthAdjust="spacingAndGlyphs">КС1</text>
<text transform="matrix(0.5302 0.3316 -0.8968 0.2669 218.07 443.41)" font-size="12" fill="#d88a80" textLength="36" lengthAdjust="spacingAndGlyphs">+1.000</text>
<path d="M226.2 440.1 L239.7 448.3 L269.7 460.3" stroke="#d08888" stroke-width="1" fill="none" stroke-dasharray="2 1"/>
<path d="M271 459.9 L273.8 462.1 L268.4 460.9 Z" stroke="#d08888" stroke-width="1" fill="none" stroke-dasharray="2 1"/>
<text transform="matrix(0.5362 0.3499 -0.9281 0.2817 189.73 442.71)" font-size="11.5" fill="#9a9da3" textLength="102.8" lengthAdjust="spacingAndGlyphs">Технологическая</text>
<text transform="matrix(0.6188 0.4038 -0.9625 0.3251 247.76 480.58)" font-size="11.5" fill="#9a9da3" textLength="58.6" lengthAdjust="spacingAndGlyphs">Насосная</text>
<text transform="matrix(0.6606 0.4311 -0.9774 0.3471 286.89 506.11)" font-size="11.5" fill="#9a9da3" textLength="7.3" lengthAdjust="spacingAndGlyphs">1</text>
<text transform="matrix(0.3093 0.2018 -0.7838 0.1624 45.29 348.46)" font-size="11.5" fill="#9a9da3" textLength="94" lengthAdjust="spacingAndGlyphs">Электрощитовая</text>
<text transform="matrix(0.3337 0.2017 -0.7639 0.1623 91.42 353.14)" font-size="11.5" fill="#eab070" textLength="47" lengthAdjust="spacingAndGlyphs" font-weight="bold">КС2 +3.000</text>
<text transform="matrix(0.3327 0.2112 -0.7888 0.1700 81.03 362.69)" font-size="9" fill="#8f939a" textLength="26" lengthAdjust="spacingAndGlyphs">+3.000</text>
<path d="M80.9 353.8 L78.5 362.4 L88.5 368.8" stroke="#8e8e8e" stroke-width="1" fill="none"/>
<text transform="matrix(0.7667 0.4862 -0.9854 0.3915 343.09 528.39)" font-size="12.2" fill="#8f939a" textLength="35.7" lengthAdjust="spacingAndGlyphs">PT 402</text>
<text transform="matrix(0.7734 0.5035 -1.0084 0.4054 336.04 537.03)" font-size="12.2" fill="#8f939a" textLength="35.5" lengthAdjust="spacingAndGlyphs">+1.000</text>
<path d="M372.1 551.7 L337.4 529.5" stroke="#8e8e8e" stroke-width="1" fill="none"/>
<path d="M337.4 529.5 L314.3 527.8" stroke="#9c9c9c" stroke-width="0.9" fill="none" stroke-dasharray="2 1.3"/>
<path d="M316.9 527.1 L307.4 527.1 L314.7 529.2 Z" stroke="#8e8e8e" stroke-width="1" fill="none"/>
<text transform="matrix(1.0006 0.6345 -1.0252 0.5110 451.99 597.44)" font-size="12.2" fill="#8f939a" textLength="35.7" lengthAdjust="spacingAndGlyphs">TE 403</text>
<text transform="matrix(1.0144 0.6604 -1.0511 0.5319 446.11 608.69)" font-size="12.2" fill="#8f939a" textLength="35.5" lengthAdjust="spacingAndGlyphs">+1.000</text>
<path d="M491.2 627.9 L445.8 598.9" stroke="#8e8e8e" stroke-width="1" fill="none"/>
<path d="M445.8 598.9 L418.9 596.6" stroke="#9c9c9c" stroke-width="0.9" fill="none" stroke-dasharray="2 1.3"/>
<path d="M421.7 595.7 L410.9 595.7 L419.7 598.4 Z" stroke="#8e8e8e" stroke-width="1" fill="none"/>
<text transform="matrix(1.4332 0.9088 -1.0369 0.7320 622.81 705.76)" font-size="12.2" fill="#8f939a" textLength="35.7" lengthAdjust="spacingAndGlyphs">PT 401</text>
<text transform="matrix(1.4646 0.9535 -1.0649 0.7681 619.85 721.81)" font-size="12.2" fill="#8f939a" textLength="35.5" lengthAdjust="spacingAndGlyphs">+1.000</text>
<path d="M681.3 749.6 L616 707.9" stroke="#8e8e8e" stroke-width="1" fill="none"/>
<path d="M616 707.9 L582.8 704.4" stroke="#9c9c9c" stroke-width="0.9" fill="none" stroke-dasharray="2 1.3"/>
<path d="M585.8 703.1 L572.9 703.1 L584.4 707 Z" stroke="#8e8e8e" stroke-width="1" fill="none"/>
<path d="M82.8 354.3 L112.0 349.7 L111.6 346.9 L82.4 351.3 Z" fill="#0b4f0b"/>
<path d="M113.2 348.5 L114.4 340.2 L111.6 339.8 L110.4 348.1 Z" fill="#0b4f0b"/>
<circle cx="82.6" cy="352.8" r="1.48" fill="#0b4f0b"/>
<circle cx="111.8" cy="348.3" r="1.46" fill="#0b4f0b"/>
<circle cx="113.0" cy="340.0" r="1.43" fill="#0b4f0b"/>
<path d="M139.3 335.6 L340.0 441.1 L341.6 437.9 L140.7 333.0 Z" fill="#0b4f0b"/>
<path d="M340.3 437.8 L314.0 446.3 L315.0 449.7 L341.3 441.2 Z" fill="#0b4f0b"/>
<path d="M312.7 448.1 L313.2 455.4 L316.8 455.2 L316.3 447.9 Z" fill="#0b4f0b"/>
<path d="M314.5 453.6 L299.4 458.2 L300.4 461.6 L315.5 457.0 Z" fill="#0b4f0b"/>
<path d="M299.4 458.1 L286.6 461.7 L287.6 465.3 L300.4 461.7 Z" fill="#0b4f0b"/>
<circle cx="140.0" cy="334.3" r="1.42" fill="#0b4f0b"/>
<circle cx="340.8" cy="439.5" r="1.76" fill="#0b4f0b"/>
<circle cx="314.5" cy="448.0" r="1.78" fill="#0b4f0b"/>
<circle cx="315.0" cy="455.3" r="1.81" fill="#0b4f0b"/>
<circle cx="299.9" cy="459.9" r="1.82" fill="#0b4f0b"/>
<circle cx="287.1" cy="463.5" r="1.83" fill="#0b4f0b"/>
<path d="M360.0 495.4 L299.8 517.6 L301.2 521.4 L361.4 499.0 Z" fill="#0b4f0b"/>
<circle cx="360.7" cy="497.2" r="1.94" fill="#0b4f0b"/>
<circle cx="300.5" cy="519.5" r="2.02" fill="#0b4f0b"/>
<path d="M464.9 556.4 L401.0 585.0 L402.8 589.0 L466.7 560.4 Z" fill="#0b4f0b"/>
<circle cx="465.8" cy="558.4" r="2.14" fill="#0b4f0b"/>
<circle cx="401.9" cy="587.0" r="2.23" fill="#0b4f0b"/>
<path d="M298.9 461.5 L359.7 498.9 L361.7 495.5 L300.9 458.3 Z" fill="#0b4f0b"/>
<path d="M359.7 498.9 L464.7 560.3 L466.9 556.5 L361.7 495.5 Z" fill="#0b4f0b"/>
<path d="M464.7 560.3 L624.7 653.1 L627.1 648.9 L466.9 556.5 Z" fill="#0b4f0b"/>
<path d="M624.6 648.9 L559.0 689.5 L561.8 693.9 L627.2 653.1 Z" fill="#0b4f0b"/>
<circle cx="299.9" cy="459.9" r="1.82" fill="#0b4f0b"/>
<circle cx="360.7" cy="497.2" r="1.94" fill="#0b4f0b"/>
<circle cx="465.8" cy="558.4" r="2.14" fill="#0b4f0b"/>
<circle cx="625.9" cy="651.0" r="2.44" fill="#0b4f0b"/>
<circle cx="560.4" cy="691.7" r="2.57" fill="#0b4f0b"/>
<path d="M82.7 353.4L111.9 348.9" stroke="#2a8030" stroke-width="0.9" fill="none" stroke-linecap="round"/>
<path d="M112.4 348.4L113.6 340.1" stroke="#2a8030" stroke-width="0.9" fill="none" stroke-linecap="round"/>
<path d="M139.7 334.9L340.4 440.2" stroke="#2a8030" stroke-width="1.0" fill="none" stroke-linecap="round"/>
<path d="M341.0 440.2L314.7 448.7" stroke="#2a8030" stroke-width="1.1" fill="none" stroke-linecap="round"/>
<path d="M313.7 448.1L314.2 455.4" stroke="#2a8030" stroke-width="1.1" fill="none" stroke-linecap="round"/>
<path d="M315.2 456.1L300.1 460.7" stroke="#2a8030" stroke-width="1.1" fill="none" stroke-linecap="round"/>
<path d="M300.1 460.7L287.3 464.3" stroke="#2a8030" stroke-width="1.1" fill="none" stroke-linecap="round"/>
<path d="M361.0 498.0L300.8 520.3" stroke="#2a8030" stroke-width="1.2" fill="none" stroke-linecap="round"/>
<path d="M466.2 559.3L402.3 587.9" stroke="#2a8030" stroke-width="1.3" fill="none" stroke-linecap="round"/>
<path d="M299.5 460.6L360.3 497.9" stroke="#2a8030" stroke-width="1.1" fill="none" stroke-linecap="round"/>
<path d="M360.3 497.9L465.3 559.2" stroke="#2a8030" stroke-width="1.2" fill="none" stroke-linecap="round"/>
<path d="M465.3 559.2L625.4 651.9" stroke="#2a8030" stroke-width="1.4" fill="none" stroke-linecap="round"/>
<path d="M626.5 651.9L561.0 692.7" stroke="#2a8030" stroke-width="1.5" fill="none" stroke-linecap="round"/>
<circle cx="83" cy="352.6" r="2.2" fill="#222"/>
<g><path d="M681 385V367" stroke="#38388c" stroke-width="3.2"/><path d="M681 359.3l3.8 9.2h-7.6z" fill="#38388c"/><path d="M681 385L672 379" stroke="#8a3a3a" stroke-width="3.2"/><path d="M667.4 375.4l7.4 1.2l-3.6 5z" fill="#8a3a3a"/><path d="M681 385L664 392.6" stroke="#3a8a3a" stroke-width="3"/><path d="M657.5 395.4l8-6l2.4 5.6z" fill="#3a8a3a"/><text x="676.2" y="357" font-size="10.5" fill="#222">Z</text><text x="660.5" y="378.5" font-size="10.5" fill="#222">X</text><text x="646.8" y="403" font-size="10.5" fill="#222">Y</text></g>
<path d="M663.2 801.4L682.6 794.8L699.2 803.5L678.6 811.8Z" fill="#7b7bfb"/><path d="M663.2 801.4L678.6 811.8L678.9 833.5L665.5 820.6Z" fill="#7bbb7b"/><path d="M678.6 811.8L699.2 803.5L696.9 822.9L678.9 833.5Z" fill="#fb7b7b"/>
<text transform="matrix(-0.75 -0.5 1.19 -0.47 689 802.8)" font-size="12" fill="#fff" fill-opacity="0.92">В</text>
<text transform="matrix(0.6 0.4 0.13 1.1 667.6 822.6)" font-size="16" fill="#fff" fill-opacity="0.92">Л</text>
<text transform="matrix(0.85 -0.34 -0.05 1.1 684.6 827.8)" font-size="16" fill="#fff" fill-opacity="0.92">З</text>
</svg>
</div>
</div>
</body></html>
